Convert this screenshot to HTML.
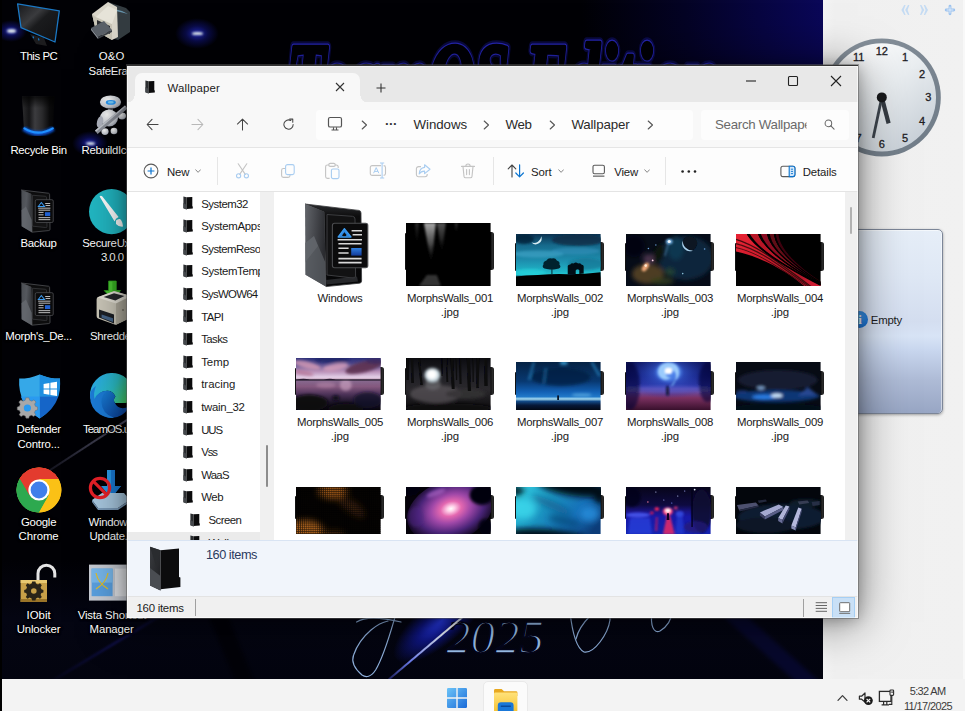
<!DOCTYPE html>
<html><head><meta charset="utf-8"><title>Desktop</title>
<style>
*{box-sizing:border-box;margin:0;padding:0}
html,body{width:965px;height:711px;overflow:hidden;background:#000;font-family:"Liberation Sans",sans-serif}
.abs{position:absolute}
.layer{position:absolute;left:0;top:0;width:965px;height:711px}
.tx{position:absolute;white-space:nowrap}
#wall{position:absolute;left:0;top:0;width:823px;height:679px;background:#010105;overflow:hidden}
#side{position:absolute;left:823px;top:0;width:142px;height:679px;background:#f1f1f1;overflow:hidden}
#task{position:absolute;left:0;top:679px;width:965px;height:32px;background:#f3f3f3;overflow:hidden}
#winframe{position:absolute;left:127px;top:65px;width:731px;height:553px;background:#fff;box-shadow:0 0 0 1px rgba(90,90,90,.5),0 4px 44px rgba(0,0,0,.5),0 1px 14px rgba(0,0,0,.28)}
#win{clip-path:polygon(127px 65px,858px 65px,858px 618px,127px 618px)}
.dl{position:absolute;width:90px;text-align:center;color:#fff;font-size:12px;line-height:14.6px;text-shadow:0 1px 1px rgba(0,0,0,.9),0 0 3px #000,0 0 2px #000;white-space:nowrap}
</style></head><body>
<div id="wall"><div class="abs" style="left:0;top:0;width:823px;height:679px;background:radial-gradient(ellipse 320px 300px at 900px -10px,#0d0970 0,#0a0758 25%,#070540 45%,#040324 68%,rgba(2,2,10,0) 100%)"></div><div class="abs" style="left:0;top:560px;width:823px;height:119px;background:linear-gradient(180deg,rgba(4,5,18,0) 0,#040512 50%,#03040f 100%)"></div><div class="abs" style="left:225px;top:600px;width:18px;height:110px;background:#020208;transform:rotate(-22deg);filter:blur(2px)"></div><div class="abs" style="left:770px;top:590px;width:16px;height:130px;background:#07082c;transform:rotate(-48deg);filter:blur(2px)"></div><div class="abs" style="left:-40px;top:443.4px;width:260px;height:1.7px;background:linear-gradient(90deg,rgba(90,90,120,0) 12%,rgba(80,80,110,.3) 35%,rgba(120,120,150,.62) 62%,rgba(110,110,140,.5) 100%);transform:rotate(-33.1deg);filter:blur(.5px)"></div><div class="abs" style="left:30px;top:642px;width:170px;height:1.6px;background:linear-gradient(90deg,rgba(20,20,110,0),rgba(22,22,110,.7) 50%,rgba(20,20,110,0));transform:rotate(-31deg);filter:blur(.8px)"></div><div class="abs" style="left:-5px;top:19.8px;width:32px;height:22.4px;background:radial-gradient(ellipse at center,rgba(40,50,230,.75) 0,rgba(20,24,150,.45) 35%,rgba(8,8,60,0) 70%)"></div><div class="abs" style="left:6.5px;top:29.3px;width:9px;height:3.4px;border-radius:50%;background:#dfe8e8;filter:blur(1px)"></div><div class="abs" style="left:175px;top:18.1px;width:44px;height:30.799999999999997px;background:radial-gradient(ellipse at center,rgba(40,50,230,.75) 0,rgba(20,24,150,.45) 35%,rgba(8,8,60,0) 70%)"></div><div class="abs" style="left:191.5px;top:31.7px;width:11px;height:3.6px;border-radius:50%;background:#dfe8e8;filter:blur(1px)"></div><div class="abs" style="left:94px;top:6.600000000000001px;width:24px;height:16.799999999999997px;background:radial-gradient(ellipse at center,rgba(40,50,230,.75) 0,rgba(20,24,150,.45) 35%,rgba(8,8,60,0) 70%)"></div><div class="abs" style="left:103.5px;top:14.0px;width:5px;height:2px;border-radius:50%;background:#dfe8e8;filter:blur(1px)"></div><div class="abs" style="left:72px;top:130.9px;width:36px;height:25.2px;background:radial-gradient(ellipse at center,rgba(40,50,230,.75) 0,rgba(20,24,150,.45) 35%,rgba(8,8,60,0) 70%)"></div><div class="abs" style="left:85.5px;top:142.0px;width:9px;height:3px;border-radius:50%;background:#dfe8e8;filter:blur(1px)"></div><div class="abs" style="left:385px;top:606px;width:96px;height:44px;background:radial-gradient(ellipse at 62% 50%,rgba(44,64,255,.95) 0,rgba(20,30,190,.65) 35%,rgba(8,10,80,0) 72%);transform:rotate(-40deg)"></div><svg class="abs" style="left:0;top:0" width="823" height="679" viewBox="0 0 823 679">
<g transform="translate(287,113.6) scale(1,1.63)" stroke-linejoin="round"><text x="0" y="0" font-family="'Liberation Serif','DejaVu Serif',serif" font-weight="bold" font-style="italic" font-size="62" textLength="432" lengthAdjust="spacingAndGlyphs" fill="none" stroke="#14147a" stroke-width="7" opacity=".5">TeamOS Edition</text><text x="0" y="0" font-family="'Liberation Serif','DejaVu Serif',serif" font-weight="bold" font-style="italic" font-size="62" textLength="432" lengthAdjust="spacingAndGlyphs" fill="none" stroke="#2626b4" stroke-width="4.4">TeamOS Edition</text><text x="0" y="0" font-family="'Liberation Serif','DejaVu Serif',serif" font-weight="bold" font-style="italic" font-size="62" textLength="432" lengthAdjust="spacingAndGlyphs" fill="#010106" stroke="#010106" stroke-width="2.8">TeamOS Edition</text></g>
<text x="446" y="653" font-family="'Liberation Serif',serif" font-style="italic" font-size="47" textLength="98" lengthAdjust="spacingAndGlyphs" fill="#9cc2ee" stroke="#04051a" stroke-width="1.7">2025</text>
<g fill="none" stroke="#8fb0dc" stroke-width="1.2" stroke-linecap="round">
<path d="M356.6 622C364 617 380 617 401 622"/><path d="M395 617C390 634 384 656 375.6 670C371 677 366 678 362 675C355 669 351 662 353.6 655C357 645 364 636 371 630C377 625 383 622 388 621"/>
<path d="M570 612C572 630 576 648 584 652C594 654 608 634 610 620C611 612 604 610 596 616"/>
<path d="M591 615C585 621 578 630 576 639"/>
<path d="M652 612C650 626 654 634 660 631C667 627 672 619 672 612"/>
</g></svg><div class="abs" style="left:374px;top:647px;width:104px;height:2.2px;background:linear-gradient(90deg,rgba(60,60,200,.3),#6a7ae8 30%,#e8f0ff 70%,#fff 82%,#cfe0ff 100%);transform:rotate(-40.2deg);filter:blur(.7px)"></div></div>
<div id="side"><div class="abs" style="left:0;top:0;width:142px;height:679px;background:linear-gradient(90deg,#f4f4f4 0,#f0f0f0 12px,#f1f1f1 100%)"></div><div class="abs" style="left:140px;top:0;width:2px;height:679px;background:#f8f8f8"></div><svg class="abs" style="left:76px;top:3px" width="60" height="14" viewBox="0 0 60 14"><g fill="#c4dbf3"><path d="M5.2 2L2.4 7L5.2 12L6.6 12L4.8 7L6.6 2ZM9 2L6.2 7L9 12L10.4 12L8.6 7L10.4 2Z"/><path d="M21 2L22.8 7L21 12L22.4 12L25.2 7L22.4 2ZM24.8 2L26.6 7L24.8 12L26.2 12L29 7L26.2 2Z"/></g><path d="M51 3.2V10.8M47.2 7H54.8" stroke="#9cc2ee" stroke-width="2.8" stroke-linecap="round"/><path d="M51 4V10M48 7H54" stroke="#e4f0fc" stroke-width=".9" stroke-linecap="round"/></svg><svg class="abs" style="left:0;top:30px" width="142" height="135" viewBox="0 30 142 135"><defs><linearGradient id="ck1" x1="0.15" y1="0.1" x2="0.85" y2="0.95"><stop offset="0" stop-color="#ffffff"/><stop offset="0.45" stop-color="#e9edf0"/><stop offset="1" stop-color="#c6ced6"/></linearGradient><linearGradient id="ck2" x1="0" y1="0" x2="1" y2="1"><stop offset="0" stop-color="#8a949e"/><stop offset="1" stop-color="#6e7a86"/></linearGradient><filter id="ckb"><feGaussianBlur stdDeviation=".5"/></filter></defs>
<circle cx="58.799999999999955" cy="97.4" r="59" fill="url(#ck2)"/><circle cx="58.799999999999955" cy="97.4" r="54.2" fill="url(#ck1)"/>
<text x="82.0" y="61.1" text-anchor="middle" font-family="'Liberation Sans',sans-serif" font-size="11" fill="#1e2024" stroke="#1e2024" stroke-width=".3">1</text><text x="99.0" y="78.1" text-anchor="middle" font-family="'Liberation Sans',sans-serif" font-size="11" fill="#1e2024" stroke="#1e2024" stroke-width=".3">2</text><text x="105.2" y="101.3" text-anchor="middle" font-family="'Liberation Sans',sans-serif" font-size="11" fill="#1e2024" stroke="#1e2024" stroke-width=".3">3</text><text x="99.0" y="124.5" text-anchor="middle" font-family="'Liberation Sans',sans-serif" font-size="11" fill="#1e2024" stroke="#1e2024" stroke-width=".3">4</text><text x="82.0" y="141.5" text-anchor="middle" font-family="'Liberation Sans',sans-serif" font-size="11" fill="#1e2024" stroke="#1e2024" stroke-width=".3">5</text><text x="58.8" y="147.7" text-anchor="middle" font-family="'Liberation Sans',sans-serif" font-size="11" fill="#1e2024" stroke="#1e2024" stroke-width=".3">6</text><text x="35.6" y="141.5" text-anchor="middle" font-family="'Liberation Sans',sans-serif" font-size="11" fill="#1e2024" stroke="#1e2024" stroke-width=".3">7</text><text x="18.6" y="124.5" text-anchor="middle" font-family="'Liberation Sans',sans-serif" font-size="11" fill="#1e2024" stroke="#1e2024" stroke-width=".3">8</text><text x="12.4" y="101.3" text-anchor="middle" font-family="'Liberation Sans',sans-serif" font-size="11" fill="#1e2024" stroke="#1e2024" stroke-width=".3">9</text><text x="18.6" y="78.1" text-anchor="middle" font-family="'Liberation Sans',sans-serif" font-size="11" fill="#1e2024" stroke="#1e2024" stroke-width=".3">10</text><text x="35.6" y="61.1" text-anchor="middle" font-family="'Liberation Sans',sans-serif" font-size="11" fill="#1e2024" stroke="#1e2024" stroke-width=".3">11</text><text x="58.8" y="54.9" text-anchor="middle" font-family="'Liberation Sans',sans-serif" font-size="11" fill="#1e2024" stroke="#1e2024" stroke-width=".3">12</text>
<g filter="url(#ckb)"><path d="M58.799999999999955 97.4L65.60000000000002 123.4" stroke="#343a42" stroke-width="4.2" stroke-linecap="butt"/><path d="M58.799999999999955 97.4L50.200000000000045 138" stroke="#3e454e" stroke-width="2.8"/></g>
<circle cx="58.799999999999955" cy="97.4" r="5" fill="#18191b"/></svg><div class="abs" style="left:-40px;top:228.6px;width:160px;height:185px;border-radius:5px;border:1.2px solid #7c8698;background:linear-gradient(180deg,#e6eef8 0,#dfe8f5 25%,#d4def0 50%,#d8e4f6 58%,#c8d6ee 66%,#aebbd6 82%,#98a6c4 100%);box-shadow:inset 0 1px 0 #f4f8fc, inset -1px 0 0 rgba(255,255,255,.5),0 1px 3px rgba(0,0,0,.35)"></div><div class="abs" style="left:28px;top:311px;width:17px;height:17px;border-radius:50%;background:radial-gradient(circle at 40% 30%,#4aa8f8,#0a64d0)"></div><span class="tx" style="left:35.2px;top:311.6px;font-size:13px;line-height:16px;color:#fff;font-weight:bold;font-family:'Liberation Serif',serif;">i</span><span class="tx" style="left:47.8px;top:312.2px;font-size:11.4px;line-height:16px;color:#1c1c1c;letter-spacing:-0.22px;">Empty</span></div>
<div class="layer" id="icons"><svg class="abs" style="left:0px;top:0px" width="76" height="50" viewBox="0 0 76 50"><defs><linearGradient id="pc1" x1="0" y1="0" x2="1" y2="1"><stop offset="0" stop-color="#16171a"/><stop offset="0.35" stop-color="#3a3b3e"/><stop offset="0.5" stop-color="#1a1b1d"/><stop offset="1" stop-color="#101012"/></linearGradient></defs>
<path d="M30 34L36 44L47 46L44 38Z" fill="#1c1c1e"/><path d="M33 36.4L33.6 38.2M38.4 38.4L39 40.4" stroke="#1a7ac8" stroke-width="1.2"/>
<path d="M17.6 3.9L59.3 10.9L55 42L21 27.6Z" fill="url(#pc1)" stroke="#1b78c4" stroke-width="1.3" stroke-linejoin="round"/></svg><span class="tx" style="left:19.9px;top:48.4px;font-size:11.4px;line-height:16px;color:#fff;letter-spacing:-0.43px;text-shadow:0 1px 1.5px #000,1px 1px 2px #000,0 0 3px #000;">This PC</span><svg class="abs" style="left:88px;top:0px" width="44" height="44" viewBox="0 0 44 44"><path d="M20 2L38 8L42 12V32L30 40L24 38Z" fill="#3a4248" opacity=".9"/><path d="M22 8L34 11L40 14L28 11Z" fill="#7ab8d8" opacity=".7"/>
<path d="M4 14L20 2L29 7L30 37L24 40L8 31Z" fill="#d9d5c9"/><path d="M4 14L8 17L24 24L24 40L8 31Z" fill="#c8c4b6"/><path d="M8 17L20 6L29 10L24 24Z" fill="#e6e3d8"/>
<path d="M9 20L22 26V34L9 28Z" fill="#2a2c30"/><path d="M3 28L16 21L24 30L10 37Z" fill="#5a6068"/><path d="M3 28L10 37V39L3 30Z" fill="#8a9098"/><path d="M10 37L24 30V32L10 39Z" fill="#3a3e44"/></svg><span class="tx" style="left:98.7px;top:48.4px;font-size:11.4px;line-height:16px;color:#fff;letter-spacing:0.15px;text-shadow:0 1px 1.5px #000,1px 1px 2px #000,0 0 3px #000;">O&amp;O</span><span class="tx" style="left:88.6px;top:63.0px;font-size:11.4px;line-height:16px;color:#fff;letter-spacing:-0.31px;text-shadow:0 1px 1.5px #000,1px 1px 2px #000,0 0 3px #000;">SafeErase</span><svg class="abs" style="left:14px;top:92px" width="50" height="50" viewBox="0 0 50 50"><defs><linearGradient id="rb1" x1="0" y1="0" x2="1" y2="0"><stop offset="0" stop-color="#2c2c2e"/><stop offset="0.22" stop-color="#141416"/><stop offset="0.4" stop-color="#3c3c3f"/><stop offset="0.62" stop-color="#2a2a2c"/><stop offset="0.85" stop-color="#0a0a0b"/><stop offset="1" stop-color="#050506"/></linearGradient><linearGradient id="rb2" x1="0" y1="0" x2="0" y2="1"><stop offset="0" stop-color="#000" stop-opacity=".75"/><stop offset="0.3" stop-color="#000" stop-opacity="0"/></linearGradient><filter id="rbb" x="-20%" y="-50%" width="140%" height="200%"><feGaussianBlur stdDeviation="1.1"/></filter></defs>
<path d="M8 4.6H40.4L39 38Q24 47 10 38Z" fill="url(#rb1)"/><path d="M8 4.6H40.4L39 38Q24 47 10 38Z" fill="url(#rb2)"/>
<path d="M9.6 36.5Q24 46.5 39.4 36.5" fill="none" stroke="#0a50c8" stroke-width="5" filter="url(#rbb)"/><path d="M10.4 36.4Q24 45 38.8 36.4" fill="none" stroke="#1e90ff" stroke-width="2.2" stroke-linecap="round"/></svg><span class="tx" style="left:10.4px;top:142.4px;font-size:11.4px;line-height:16px;color:#fff;letter-spacing:-0.34px;text-shadow:0 1px 1.5px #000,1px 1px 2px #000,0 0 3px #000;">Recycle Bin</span><svg class="abs" style="left:92px;top:92px" width="36" height="48" viewBox="0 0 36 48"><defs><radialGradient id="ro1" cx=".4" cy=".3" r=".8"><stop offset="0" stop-color="#fff"/><stop offset=".7" stop-color="#c8ccd4"/><stop offset="1" stop-color="#8a90a0"/></radialGradient></defs>
<ellipse cx="18.5" cy="10" rx="10.6" ry="6.6" fill="url(#ro1)"/><ellipse cx="18.8" cy="10.4" rx="5" ry="2.4" fill="#2a9af8"/><ellipse cx="18.8" cy="10.2" rx="3" ry="1.2" fill="#7ad0ff"/>
<rect x="16" y="16" width="5" height="3" fill="#50545c"/><ellipse cx="17" cy="26" rx="9" ry="8.6" fill="url(#ro1)"/><ellipse cx="8" cy="30" rx="3" ry="6" fill="#b0b4c0" transform="rotate(14 8 30)"/><ellipse cx="30" cy="24" rx="4" ry="3.4" fill="url(#ro1)"/>
<ellipse cx="13" cy="39.6" rx="3.6" ry="3.4" fill="url(#ro1)"/><ellipse cx="22" cy="39" rx="3.4" ry="3.2" fill="url(#ro1)"/>
<path d="M3 38.6L33 13.6L35.6 16.6L5.6 42Z" fill="#8e929c"/><path d="M3 38.6L33 13.6L33.8 14.6L4 39.8Z" fill="#c4c8d0"/></svg><span class="tx" style="left:81.5px;top:142.4px;font-size:11.4px;line-height:16px;color:#fff;letter-spacing:-0.31px;text-shadow:0 1px 1.5px #000,1px 1px 2px #000,0 0 3px #000;">RebuildIconCache</span><svg class="abs" style="left:20.4px;top:189px" width="35" height="44.4" viewBox="0 0 34 44"><defs><linearGradient id="df1a" x1="0" y1="0" x2="1" y2="0.3"><stop offset="0" stop-color="#4a4d52"/><stop offset="0.5" stop-color="#55585e"/><stop offset="1" stop-color="#34363a"/></linearGradient></defs>
<path d="M1 1L28 4.2Q29 4.4 29 5.6L29.4 40Q29.4 41 28.2 41.2L11.6 42.8L10.4 5Z" fill="#0d0d0e" stroke="#4e4f53" stroke-width=".8"/>
<path d="M12 6.2L24.8 7.2Q26 7.4 26 8.6L26.4 37.2Q26.4 38.4 25 38.2L12 36.8Z" fill="#131314" stroke="#3c3d40" stroke-width=".7"/>
<path d="M1 1L10.8 5L11.6 43L1.3 37Z" fill="url(#df1a)"/>
<path d="M1.1 21L5.6 17.4L11.2 30.6L11.6 43L1.3 37Z" fill="#666a70" opacity=".8"/>
<rect x="14.8" y="10.6" width="17.8" height="22.6" rx="1.4" fill="#0b0b0c" stroke="#4c4d50" stroke-width=".8"/>
<path d="M17.8 17.4L20.8 13.4L24 17.4Z" fill="none" stroke="#3b9bf0" stroke-width="1"/>
<g stroke="#d0d0d0" stroke-width=".9"><path d="M24.6 14.4H29.6M25 16.4H29.6M17.6 19H29.8M18 21H29.6M18 23.2H23M18 25.6H23M18 28.4H29.6M18 30.4H29.6"/></g>
<rect x="24.4" y="23" width="5.2" height="3.8" fill="#1f5fd0"/></svg><span class="tx" style="left:20.6px;top:235.4px;font-size:11.4px;line-height:16px;color:#fff;letter-spacing:-0.34px;text-shadow:0 1px 1.5px #000,1px 1px 2px #000,0 0 3px #000;">Backup</span><svg class="abs" style="left:88px;top:188px" width="48" height="48" viewBox="0 0 48 48"><circle cx="23.6" cy="23.6" r="22.6" fill="#22b8c4"/><path d="M11.6 8.4Q13 7 14.4 8.6L30.6 29Q27.4 30.4 26.6 33.4Z" fill="#fff"/><path d="M28 32.6Q29.6 30.6 32 31Q34.6 33 35 38.6Q30.6 39 28 36Z" fill="#fff"/></svg><span class="tx" style="left:82.3px;top:235.4px;font-size:11.4px;line-height:16px;color:#fff;letter-spacing:-0.29px;text-shadow:0 1px 1.5px #000,1px 1px 2px #000,0 0 3px #000;">SecureUxT...</span><span class="tx" style="left:100.9px;top:249.4px;font-size:11.4px;line-height:16px;color:#fff;letter-spacing:-0.53px;text-shadow:0 1px 1.5px #000,1px 1px 2px #000,0 0 3px #000;">3.0.0</span><svg class="abs" style="left:20.4px;top:282px" width="35" height="44.4" viewBox="0 0 34 44"><defs><linearGradient id="df1b" x1="0" y1="0" x2="1" y2="0.3"><stop offset="0" stop-color="#4a4d52"/><stop offset="0.5" stop-color="#55585e"/><stop offset="1" stop-color="#34363a"/></linearGradient></defs>
<path d="M1 1L28 4.2Q29 4.4 29 5.6L29.4 40Q29.4 41 28.2 41.2L11.6 42.8L10.4 5Z" fill="#0d0d0e" stroke="#4e4f53" stroke-width=".8"/>
<path d="M12 6.2L24.8 7.2Q26 7.4 26 8.6L26.4 37.2Q26.4 38.4 25 38.2L12 36.8Z" fill="#131314" stroke="#3c3d40" stroke-width=".7"/>
<path d="M1 1L10.8 5L11.6 43L1.3 37Z" fill="url(#df1b)"/>
<path d="M1.1 21L5.6 17.4L11.2 30.6L11.6 43L1.3 37Z" fill="#666a70" opacity=".8"/>
<rect x="14.8" y="10.6" width="17.8" height="22.6" rx="1.4" fill="#0b0b0c" stroke="#4c4d50" stroke-width=".8"/>
<path d="M17.8 17.4L20.8 13.4L24 17.4Z" fill="none" stroke="#3b9bf0" stroke-width="1"/>
<g stroke="#d0d0d0" stroke-width=".9"><path d="M24.6 14.4H29.6M25 16.4H29.6M17.6 19H29.8M18 21H29.6M18 23.2H23M18 25.6H23M18 28.4H29.6M18 30.4H29.6"/></g>
<rect x="24.4" y="23" width="5.2" height="3.8" fill="#1f5fd0"/></svg><span class="tx" style="left:5.3px;top:328.2px;font-size:11.4px;line-height:16px;color:#fff;letter-spacing:-0.31px;text-shadow:0 1px 1.5px #000,1px 1px 2px #000,0 0 3px #000;">Morph's_De...</span><svg class="abs" style="left:94px;top:280px" width="38" height="46" viewBox="0 0 38 46"><path d="M14.6 1H22.2V10.6H26.6L18.4 19.4L10.2 10.6H14.6Z" fill="#4cc834" stroke="#2c9a1c" stroke-width=".8"/><path d="M18.4 1H22.2V10.6H26.6L18.4 19.4Z" fill="#38b024"/>
<path d="M2.6 19.6Q2.4 17.6 4.6 16.8L19 11.4Q20.6 11 22 11.6L35.6 15.6Q37 16.2 37 18V37.6L22.6 44.6Q21.6 45 20.6 44.6L4 38.4Q2.6 37.8 2.6 36Z" fill="#cdc9bb"/>
<path d="M3.4 17.4L20 11.2L36.6 16L22 23.4Z" fill="#e6e3d8"/><path d="M9.6 17L20 13.2L30.4 16L21.4 20.4Z" fill="#26282c"/>
<path d="M22 23.4L37 16.4V37.6L22 44.8Z" fill="#b2ae9f"/>
<path d="M5 29.6L20 34.6V43.4L5 37.6Z" fill="#1c2026"/><path d="M7.6 34.4L19 38.2V42L7.6 37.8Z" fill="#4a6c94" opacity=".9"/><circle cx="29" cy="30" r="1" fill="#7a766a"/></svg><span class="tx" style="left:89.9px;top:328.2px;font-size:11.4px;line-height:16px;color:#fff;letter-spacing:-0.31px;text-shadow:0 1px 1.5px #000,1px 1px 2px #000,0 0 3px #000;">Shredder</span><svg class="abs" style="left:16px;top:372px" width="46" height="48" viewBox="0 0 46 48"><path d="M23.6 2.4Q33 6.6 44 6.6Q45.6 32 23.6 46.6Q1.6 32 3.2 6.6Q14 6.6 23.6 2.4Z" fill="#35a8e8"/><path d="M23.6 2.4Q33 6.6 44 6.6Q44.6 17 42.4 24.6H23.6Z" fill="#1e8ee0"/><path d="M23.6 24.6H42.4Q38 38 23.6 46.6Z" fill="#1565c8"/><path d="M23.6 24.6V46.6Q9.4 38 4.8 24.6Z" fill="#2a9af0"/>
<path d="M27.6 12L33.4 11V16.4H27.6ZM34.4 10.8L41 9.8V16.4H34.4ZM27.6 17.4H33.4V22.8L27.6 21.8ZM34.4 17.4H41V24L34.4 23Z" fill="#fff"/>
<g transform="translate(11.4,36)"><path d="M-2 -11H2L2.8 -8L5.6 -6.8L8.4 -8.4L11 -5.6L9.2 -3L10.2 -0.2L13 .8V4.4L10.2 5.2L9 8L10.6 10.6L8 13L5.4 11.4L2.6 12.4L1.8 15H-1.8L-2.6 12.4L-5.4 11.4L-8 13L-10.6 10.6L-9 8L-10.2 5.2L-13 4.4V.8L-10.2 -.2L-9.2 -3L-11 -5.6L-8.4 -8.4L-5.6 -6.8L-2.8 -8Z" fill="#a8a8a8" stroke="#6a6a6a" stroke-width=".6" transform="scale(.78) translate(0,-2)"/><circle cx="0" cy="0" r="3.6" fill="#2a9af0"/></g></svg><span class="tx" style="left:16.5px;top:421.4px;font-size:11.4px;line-height:16px;color:#fff;letter-spacing:-0.32px;text-shadow:0 1px 1.5px #000,1px 1px 2px #000,0 0 3px #000;">Defender</span><span class="tx" style="left:17.4px;top:435.8px;font-size:11.4px;line-height:16px;color:#fff;letter-spacing:-0.14px;text-shadow:0 1px 1.5px #000,1px 1px 2px #000,0 0 3px #000;">Contro...</span><svg class="abs" style="left:88px;top:372px" width="48" height="48" viewBox="0 0 48 48"><defs><linearGradient id="ed1" x1="0" y1="0.2" x2="1" y2="0.6"><stop offset="0" stop-color="#2aa8ec"/><stop offset="0.55" stop-color="#2cc0c8"/><stop offset="1" stop-color="#4cd860"/></linearGradient><linearGradient id="ed3" x1="0" y1="0" x2="1" y2="1"><stop offset="0" stop-color="#1a88e0"/><stop offset="1" stop-color="#0a3c98"/></linearGradient></defs>
<path d="M2 24A22 22 0 0 1 46 22Q46 31 37 31H27Q24.6 28 27.4 24.6Q24 16.6 15 19.4Q6.4 22.6 6.6 32Q2 28 2 24Z" fill="url(#ed1)"/>
<path d="M6.6 32Q6.4 22.6 15 19.4Q24 16.6 27.4 24.6Q24.6 28 27 31Q30 38.6 41 35Q35 46 23 46Q10.6 45 6.6 32Z" fill="url(#ed3)"/>
<path d="M2 24Q2 36 12 42.6Q20 47 26 45.8Q14 42 13.4 30Q13.6 23 19 19Q10 19 6.6 27Q5 21 8 14Q2 18 2 24Z" fill="#1c7cd8"/></svg><span class="tx" style="left:83.0px;top:421.4px;font-size:11.4px;line-height:16px;color:#fff;letter-spacing:-0.97px;text-shadow:0 1px 1.5px #000,1px 1px 2px #000,0 0 3px #000;">TeamOS.url</span><svg class="abs" style="left:15px;top:466px" width="48" height="48" viewBox="0 0 48 48"><circle cx="24" cy="24" r="22.4" fill="#fbc116"/><path d="M24 24L4.6 12.8A22.4 22.4 0 0 1 43.4 12.8Z" fill="#e33b2e"/><path d="M24 24L4.6 12.8A22.4 22.4 0 0 0 24 46.4L33.6 29.6Z" fill="#2da94f"/><path d="M24 13H43.6A22.4 22.4 0 0 0 4.6 12.8L14.4 29.6Z" fill="#e33b2e"/><path d="M14.4 29.6L4.6 12.8A22.4 22.4 0 0 0 24 46.4L33.6 29.6Z" fill="#2da94f"/><path d="M33.6 29.6L24 46.4A22.4 22.4 0 0 0 43.5 13H24Z" fill="#fbc116"/><circle cx="24" cy="24" r="10.6" fill="#fff"/><circle cx="24" cy="24" r="8.4" fill="#3f7fea"/></svg><span class="tx" style="left:20.9px;top:514.0px;font-size:11.4px;line-height:16px;color:#fff;letter-spacing:-0.23px;text-shadow:0 1px 1.5px #000,1px 1px 2px #000,0 0 3px #000;">Google</span><span class="tx" style="left:18.6px;top:528.4px;font-size:11.4px;line-height:16px;color:#fff;letter-spacing:-0.09px;text-shadow:0 1px 1.5px #000,1px 1px 2px #000,0 0 3px #000;">Chrome</span><svg class="abs" style="left:88px;top:466px" width="44" height="48" viewBox="0 0 44 48"><path d="M19 4H27V20H33L23 32L13 20H19Z" fill="#2a9ae8"/><path d="M23 4H27V20H33L23 32Z" fill="#1a78d0"/><path d="M4 34L14 27H36L42 34L30 42H10Z" fill="#a8c8e0"/><path d="M10 42H30L42 34V36L30 44H10L4 36V34Z" fill="#7a9ab8"/><circle cx="12" cy="22" r="9.6" fill="none" stroke="#e82028" stroke-width="3.2"/><path d="M5.4 15.4L18.6 28.6" stroke="#e82028" stroke-width="3.2"/></svg><span class="tx" style="left:88.6px;top:514.0px;font-size:11.4px;line-height:16px;color:#fff;letter-spacing:-0.35px;text-shadow:0 1px 1.5px #000,1px 1px 2px #000,0 0 3px #000;">Windows</span><span class="tx" style="left:89.6px;top:528.4px;font-size:11.4px;line-height:16px;color:#fff;letter-spacing:-0.27px;text-shadow:0 1px 1.5px #000,1px 1px 2px #000,0 0 3px #000;">Update...</span><svg class="abs" style="left:18px;top:560px" width="42" height="46" viewBox="0 0 42 46"><path d="M20 20V13.6A8.4 8.4 0 0 1 36.8 13.6V17.6" fill="none" stroke="#e4e4e4" stroke-width="3"/><rect x="2.6" y="20" width="26.4" height="22" fill="#c8a048"/><rect x="2.6" y="20" width="26.4" height="3" fill="#e8c870"/><rect x="2.6" y="39" width="26.4" height="3" fill="#9a7428"/>
<g transform="translate(15.8,31)"><path d="M-1.6 -8H1.6L2.2 -5.8L4.2 -5L6.2 -6.2L8 -4.2L6.8 -2.2L7.6 -.2L9.6 .6V3L7.6 3.6L6.8 5.6L8 7.6L6.2 9.4L4.2 8.2L2.2 9L1.6 11H-1.6L-2.2 9L-4.2 8.2L-6.2 9.4L-8 7.6L-6.8 5.6L-7.6 3.6L-9.6 3V.6L-7.6 -.2L-6.8 -2.2L-8 -4.2L-6.2 -6.2L-4.2 -5L-2.2 -5.8Z" fill="#2a2418" transform="translate(0,-1.6)"/><circle cx="0" cy="0" r="2.8" fill="#c8a048"/></g></svg><span class="tx" style="left:26.5px;top:607.2px;font-size:11.4px;line-height:16px;color:#fff;letter-spacing:0.03px;text-shadow:0 1px 1.5px #000,1px 1px 2px #000,0 0 3px #000;">IObit</span><span class="tx" style="left:16.7px;top:621.4px;font-size:11.4px;line-height:16px;color:#fff;letter-spacing:-0.15px;text-shadow:0 1px 1.5px #000,1px 1px 2px #000,0 0 3px #000;">Unlocker</span><svg class="abs" style="left:88px;top:563px" width="44" height="40" viewBox="0 0 44 40"><rect x="1" y="1.6" width="50" height="36" fill="#c8ccd4"/><rect x="3.6" y="5.6" width="21" height="27.6" fill="#5aa0e0"/><rect x="3.6" y="5.6" width="21" height="14" fill="#78b8ec"/><path d="M8 26Q18 20 20 10M20 26Q10 20 8 10" stroke="#e8c020" stroke-width="1.2" fill="none"/><rect x="27" y="5.6" width="12" height="27.6" fill="#e4e6ea"/><rect x="40" y="10" width="8" height="8" fill="#3a70d0"/></svg><span class="tx" style="left:77.7px;top:607.2px;font-size:11.4px;line-height:16px;color:#fff;letter-spacing:-0.15px;text-shadow:0 1px 1.5px #000,1px 1px 2px #000,0 0 3px #000;">Vista Shortcut</span><span class="tx" style="left:89.6px;top:621.4px;font-size:11.4px;line-height:16px;color:#fff;letter-spacing:-0.14px;text-shadow:0 1px 1.5px #000,1px 1px 2px #000,0 0 3px #000;">Manager</span></div>
<div id="winframe"></div>
<div class="layer" id="win">
<div class="abs" style="left:127px;top:65px;width:731px;height:37px;background:#e8e8e8"></div><div class="abs" style="left:135px;top:73px;width:225px;height:30px;background:#f8f8f8;border-radius:7px 7px 0 0"></div><div class="abs" style="left:128px;top:96px;width:7px;height:6px;background:radial-gradient(circle at 0 0,#e8e8e8 6px,#f8f8f8 6.5px)"></div><div class="abs" style="left:360px;top:96px;width:7px;height:6px;background:radial-gradient(circle at 100% 0,#e8e8e8 6px,#f8f8f8 6.5px)"></div><svg class="abs" style="left:145px;top:80px" width="10" height="14" viewBox="0 0 10 14"><path d="M0.4 0.6 L3.6 1.3 L3.6 13.6 L0.4 12.3 Z" fill="#2b2d30"/><path d="M3.6 1.3 L9.3 0.9 L9.3 10.2 L9.8 10.4 L9.8 12.6 L3.6 13.0 Z" fill="#0b0b0c"/><path d="M0.4 7 L3.6 9 L3.6 13.6 L0.4 12.3Z" fill="#45484c"/></svg><span class="tx" style="left:167.6px;top:80.3px;font-size:11.4px;line-height:16px;color:#1a1a1a;letter-spacing:0.17px;">Wallpaper</span><svg class="abs" style="left:335px;top:82px" width="10" height="10" viewBox="0 0 10 10"><path d="M1 1L9 9M9 1L1 9" stroke="#333" stroke-width="1.1" fill="none"/></svg><svg class="abs" style="left:376px;top:83px" width="10" height="10" viewBox="0 0 10 10"><path d="M5 0.5V9.5M0.5 5H9.5" stroke="#333" stroke-width="1.1" fill="none"/></svg><svg class="abs" style="left:745px;top:75px" width="12" height="12" viewBox="0 0 12 12"><path d="M1 6H11" stroke="#222" stroke-width="1.1"/></svg><svg class="abs" style="left:787px;top:75px" width="12" height="12" viewBox="0 0 12 12"><rect x="1.5" y="1.5" width="9" height="9" rx="1" fill="none" stroke="#222" stroke-width="1.1"/></svg><svg class="abs" style="left:830px;top:75px" width="12" height="12" viewBox="0 0 12 12"><path d="M1 1L11 11M11 1L1 11" stroke="#222" stroke-width="1.1" fill="none"/></svg><div class="abs" style="left:127px;top:102px;width:731px;height:46px;background:#f8f8f8"></div><div class="abs" style="left:127px;top:147px;width:731px;height:1px;background:#e5e5e5"></div><svg class="abs" style="left:145.5px;top:118.2px" width="13" height="13" viewBox="0 0 14 14"><path d="M13 7H1.5M6.5 1.5L1.2 7L6.5 12.5" stroke="#444" stroke-width="1.1" fill="none" stroke-linecap="round" stroke-linejoin="round"/></svg><svg class="abs" style="left:190.5px;top:118.2px" width="13" height="13" viewBox="0 0 14 14"><path d="M1 7H12.5M7.5 1.5L12.8 7L7.5 12.5" stroke="#b8b8b8" stroke-width="1.1" fill="none" stroke-linecap="round" stroke-linejoin="round"/></svg><svg class="abs" style="left:235.5px;top:118.2px" width="13" height="13" viewBox="0 0 14 14"><path d="M7 13V1.5M1.5 6.5L7 1.2L12.5 6.5" stroke="#444" stroke-width="1.1" fill="none" stroke-linecap="round" stroke-linejoin="round"/></svg><svg class="abs" style="left:281.5px;top:118.2px" width="13" height="13" viewBox="0 0 14 14"><path d="M12 7A5 5 0 1 1 9.5 2.7" stroke="#444" stroke-width="1.1" fill="none" stroke-linecap="round"/><path d="M8.2 1.2H11.6V4.6" stroke="#444" stroke-width="1.1" fill="none" stroke-linecap="round" stroke-linejoin="round"/></svg><div class="abs" style="left:316px;top:110px;width:377px;height:30px;background:#fdfdfd;border-radius:4px"></div><svg class="abs" style="left:327px;top:116px" width="16" height="16" viewBox="0 0 16 16"><rect x="1.5" y="1.5" width="13" height="9.5" rx="1.6" fill="none" stroke="#555" stroke-width="1.2"/><path d="M4.5 14H11.5M6.5 11.3V14M9.5 11.3V14" stroke="#555" stroke-width="1.1" fill="none"/></svg><svg class="abs" style="left:361px;top:119.5px" width="7" height="10" viewBox="0 0 7 10"><path d="M1.2 1L5.5 5L1.2 9" stroke="#555" stroke-width="1.1" fill="none" stroke-linecap="round" stroke-linejoin="round"/></svg><span class="tx" style="left:385.0px;top:116.0px;font-size:13.3px;line-height:16px;color:#333;letter-spacing:-0.43px;font-weight:bold;">···</span><span class="tx" style="left:413.5px;top:115.5px;font-size:13.3px;line-height:18px;color:#2a2a2a;letter-spacing:-0.06px;">Windows</span><svg class="abs" style="left:483px;top:119.5px" width="7" height="10" viewBox="0 0 7 10"><path d="M1.2 1L5.5 5L1.2 9" stroke="#555" stroke-width="1.1" fill="none" stroke-linecap="round" stroke-linejoin="round"/></svg><span class="tx" style="left:505.5px;top:115.5px;font-size:13.3px;line-height:18px;color:#2a2a2a;letter-spacing:-0.37px;">Web</span><svg class="abs" style="left:548.5px;top:119.5px" width="7" height="10" viewBox="0 0 7 10"><path d="M1.2 1L5.5 5L1.2 9" stroke="#555" stroke-width="1.1" fill="none" stroke-linecap="round" stroke-linejoin="round"/></svg><span class="tx" style="left:571.4px;top:115.5px;font-size:13.3px;line-height:18px;color:#2a2a2a;letter-spacing:-0.15px;">Wallpaper</span><svg class="abs" style="left:647px;top:119.5px" width="7" height="10" viewBox="0 0 7 10"><path d="M1.2 1L5.5 5L1.2 9" stroke="#555" stroke-width="1.1" fill="none" stroke-linecap="round" stroke-linejoin="round"/></svg><div class="abs" style="left:701px;top:110px;width:148px;height:30px;background:#fdfdfd;border-radius:4px"></div><div class="layer" style="clip-path:polygon(701px 110px,806.5px 110px,806.5px 140px,701px 140px)"><span class="tx" style="left:715.0px;top:115.5px;font-size:13.3px;line-height:18px;color:#6a6a6a;letter-spacing:-0.29px;">Search Wallpaper</span></div><svg class="abs" style="left:824px;top:119px" width="11" height="11" viewBox="0 0 12 12"><circle cx="4.8" cy="4.8" r="3.6" fill="none" stroke="#666" stroke-width="1.1"/><path d="M7.5 7.5L11 11" stroke="#666" stroke-width="1.2" stroke-linecap="round"/></svg><div class="abs" style="left:127px;top:148px;width:731px;height:44px;background:#fdfdfd"></div><div class="abs" style="left:127px;top:191px;width:731px;height:1px;background:#e4e4e4"></div>
<svg class="abs" style="left:143px;top:163px" width="16" height="16" viewBox="0 0 16 16"><circle cx="8" cy="8" r="6.9" fill="none" stroke="#5a5a5a" stroke-width="1.1"/><path d="M8 4.6V11.4M4.6 8H11.4" stroke="#0a74d0" stroke-width="1.2" fill="none"/></svg><span class="tx" style="left:167.0px;top:163.5px;font-size:11.4px;line-height:16px;color:#1b1b1b;letter-spacing:-0.17px;">New</span><svg class="abs" style="left:195.3px;top:169.3px" width="6.2" height="4.4" viewBox="0 0 7 5"><path d="M0.8 0.9L3.5 3.8L6.2 0.9" stroke="#777" stroke-width="1" fill="none" stroke-linecap="round" stroke-linejoin="round"/></svg><div class="abs" style="left:217px;top:157px;width:1px;height:28px;background:#e6e6e6"></div><svg class="abs" style="left:235px;top:163px" width="15" height="16" viewBox="0 0 15 16"><path d="M3.2 0.8L10.3 11.4M11.8 0.8L4.7 11.4" stroke="#c4c4c4" stroke-width="1.1" fill="none" stroke-linecap="round"/><circle cx="3.6" cy="12.8" r="2.1" fill="none" stroke="#a9cdf1" stroke-width="1.1"/><circle cx="11.4" cy="12.8" r="2.1" fill="none" stroke="#a9cdf1" stroke-width="1.1"/></svg><svg class="abs" style="left:280px;top:163px" width="16" height="16" viewBox="0 0 16 16"><path d="M5.5 5.5H3.4A1.8 1.8 0 0 0 1.6 7.3V12.6A1.8 1.8 0 0 0 3.4 14.4H8.2A1.8 1.8 0 0 0 10 12.6V11.8" stroke="#c4c4c4" stroke-width="1.1" fill="none"/><rect x="5.6" y="1.6" width="8.6" height="10" rx="1.9" fill="none" stroke="#a9cdf1" stroke-width="1.1"/></svg><svg class="abs" style="left:324px;top:162px" width="16" height="18" viewBox="0 0 16 18"><path d="M5 3H3.4A1.8 1.8 0 0 0 1.6 4.8V14.6A1.8 1.8 0 0 0 3.4 16.4H5.6M11 3H12.4A1.8 1.8 0 0 1 14.2 4.8V6" stroke="#c4c4c4" stroke-width="1.1" fill="none"/><rect x="4.8" y="1.4" width="6.4" height="3" rx="1.3" fill="none" stroke="#c4c4c4" stroke-width="1.1"/><rect x="7.4" y="7" width="7.6" height="9.6" rx="1.6" fill="none" stroke="#a9cdf1" stroke-width="1.1"/></svg><svg class="abs" style="left:369px;top:162px" width="18" height="17" viewBox="0 0 18 17"><path d="M12 3.6H3.2A1.9 1.9 0 0 0 1.3 5.5V11.5A1.9 1.9 0 0 0 3.2 13.4H12M14.6 3.6A1.9 1.9 0 0 1 16.5 5.5V11.5A1.9 1.9 0 0 1 14.6 13.4" stroke="#c4c4c4" stroke-width="1.1" fill="none"/><path d="M11 1H15.2M13.1 1V16M11 16H15.2" stroke="#a9cdf1" stroke-width="1.1" fill="none"/><path d="M4.6 11.2L7.2 5.6L9.8 11.2M5.5 9.4H8.9" stroke="#a9cdf1" stroke-width="1" fill="none"/></svg><svg class="abs" style="left:415px;top:164px" width="16" height="14" viewBox="0 0 16 14"><path d="M6 2.6H3.6A2.2 2.2 0 0 0 1.4 4.8V10.6A2.2 2.2 0 0 0 3.6 12.8H10A2.2 2.2 0 0 0 12.2 10.6V10" stroke="#c4c4c4" stroke-width="1.1" fill="none"/><path d="M9.6 0.8L15 5.2L9.6 9.6V7.1C7 7 5.4 8 4.2 10C4.4 6.6 6 3.8 9.6 3.4Z" stroke="#a9cdf1" stroke-width="1.1" fill="none" stroke-linejoin="round"/></svg><svg class="abs" style="left:460px;top:163px" width="16" height="16" viewBox="0 0 16 16"><path d="M1.5 3.4H14.5M5.8 3.2A2.2 2.2 0 0 1 10.2 3.2M3 3.6L4 13.4A1.6 1.6 0 0 0 5.6 14.8H10.4A1.6 1.6 0 0 0 12 13.4L13 3.6M6.6 6.6V11.6M9.4 6.6V11.6" stroke="#c4c4c4" stroke-width="1.1" fill="none" stroke-linecap="round"/></svg><div class="abs" style="left:493px;top:157px;width:1px;height:28px;background:#e6e6e6"></div><svg class="abs" style="left:507px;top:164px" width="18" height="14" viewBox="0 0 18 14"><path d="M5 13V1.2M1.2 4.8L5 1L8.8 4.8" stroke="#444" stroke-width="1.1" fill="none" stroke-linecap="round" stroke-linejoin="round"/><path d="M12.6 0.8V12.6M8.8 9L12.6 12.8L16.4 9" stroke="#0a74d0" stroke-width="1.2" fill="none" stroke-linecap="round" stroke-linejoin="round"/></svg><span class="tx" style="left:531.0px;top:163.5px;font-size:11.4px;line-height:16px;color:#1b1b1b;letter-spacing:-0.10px;">Sort</span><svg class="abs" style="left:557.9px;top:169.3px" width="6.2" height="4.4" viewBox="0 0 7 5"><path d="M0.8 0.9L3.5 3.8L6.2 0.9" stroke="#777" stroke-width="1" fill="none" stroke-linecap="round" stroke-linejoin="round"/></svg><svg class="abs" style="left:592px;top:164px" width="14" height="14" viewBox="0 0 14 14"><rect x="1" y="1.2" width="11.4" height="8.6" rx="1.6" fill="none" stroke="#5a5a5a" stroke-width="1.1"/><path d="M1 12.2H12.4" stroke="#888" stroke-width="1.6"/></svg><span class="tx" style="left:614.2px;top:163.5px;font-size:11.4px;line-height:16px;color:#1b1b1b;letter-spacing:-0.18px;">View</span><svg class="abs" style="left:643.6px;top:169.3px" width="6.2" height="4.4" viewBox="0 0 7 5"><path d="M0.8 0.9L3.5 3.8L6.2 0.9" stroke="#777" stroke-width="1" fill="none" stroke-linecap="round" stroke-linejoin="round"/></svg><div class="abs" style="left:665px;top:157px;width:1px;height:28px;background:#e6e6e6"></div><svg class="abs" style="left:681px;top:169px" width="16" height="5" viewBox="0 0 16 5"><circle cx="1.6" cy="2.5" r="1.3" fill="#222"/><circle cx="7.8" cy="2.5" r="1.3" fill="#222"/><circle cx="14" cy="2.5" r="1.3" fill="#222"/></svg><svg class="abs" style="left:780px;top:165px" width="16" height="13" viewBox="0 0 16 13"><rect x="0.9" y="1.2" width="14" height="10.4" rx="2" fill="none" stroke="#5a5a5a" stroke-width="1.1"/><path d="M9.2 1.2H12.9A2 2 0 0 1 14.9 3.2V9.6A2 2 0 0 1 12.9 11.6H9.2Z" fill="#d6e9fb" stroke="#0a74d0" stroke-width="1.1"/><path d="M10.9 4.2H13M10.9 6.4H13M10.9 8.6H13" stroke="#0a74d0" stroke-width="0.9"/></svg><span class="tx" style="left:802.8px;top:163.5px;font-size:11.4px;line-height:16px;color:#1b1b1b;letter-spacing:-0.15px;">Details</span>
<div class="abs" style="left:127px;top:192px;width:133px;height:349px;background:#fff"></div><div class="abs" style="left:260px;top:192px;width:14px;height:349px;background:#f0f0f0"></div><div class="abs" style="left:274px;top:192px;width:584px;height:349px;background:#fff"></div><div class="abs" style="left:265.5px;top:445px;width:2px;height:42px;background:#8c8c8c;border-radius:1px"></div><div class="abs" style="left:845px;top:192px;width:13px;height:349px;background:#f0f0f0"></div><div class="abs" style="left:850px;top:207px;width:2px;height:27px;background:#b2b2b2;border-radius:1px"></div><div class="layer" style="clip-path:polygon(127px 192px,260px 192px,260px 541px,127px 541px)"><svg class="abs" style="left:183px;top:196.4px" width="10" height="14" viewBox="0 0 10 14"><path d="M0.4 0.6 L3.6 1.3 L3.6 13.6 L0.4 12.3 Z" fill="#2b2d30"/><path d="M3.6 1.3 L9.3 0.9 L9.3 10.2 L9.8 10.4 L9.8 12.6 L3.6 13.0 Z" fill="#0b0b0c"/><path d="M0.4 7 L3.6 9 L3.6 13.6 L0.4 12.3Z" fill="#45484c"/></svg><span class="tx" style="left:201.2px;top:195.6px;font-size:11.4px;line-height:16px;color:#1a1a1a;letter-spacing:-0.49px;">System32</span><svg class="abs" style="left:183px;top:219.0px" width="10" height="14" viewBox="0 0 10 14"><path d="M0.4 0.6 L3.6 1.3 L3.6 13.6 L0.4 12.3 Z" fill="#2b2d30"/><path d="M3.6 1.3 L9.3 0.9 L9.3 10.2 L9.8 10.4 L9.8 12.6 L3.6 13.0 Z" fill="#0b0b0c"/><path d="M0.4 7 L3.6 9 L3.6 13.6 L0.4 12.3Z" fill="#45484c"/></svg><span class="tx" style="left:201.2px;top:218.2px;font-size:11.4px;line-height:16px;color:#1a1a1a;letter-spacing:-0.28px;">SystemApps</span><svg class="abs" style="left:183px;top:241.6px" width="10" height="14" viewBox="0 0 10 14"><path d="M0.4 0.6 L3.6 1.3 L3.6 13.6 L0.4 12.3 Z" fill="#2b2d30"/><path d="M3.6 1.3 L9.3 0.9 L9.3 10.2 L9.8 10.4 L9.8 12.6 L3.6 13.0 Z" fill="#0b0b0c"/><path d="M0.4 7 L3.6 9 L3.6 13.6 L0.4 12.3Z" fill="#45484c"/></svg><span class="tx" style="left:201.2px;top:240.8px;font-size:11.4px;line-height:16px;color:#1a1a1a;letter-spacing:-0.53px;">SystemResources</span><svg class="abs" style="left:183px;top:264.2px" width="10" height="14" viewBox="0 0 10 14"><path d="M0.4 0.6 L3.6 1.3 L3.6 13.6 L0.4 12.3 Z" fill="#2b2d30"/><path d="M3.6 1.3 L9.3 0.9 L9.3 10.2 L9.8 10.4 L9.8 12.6 L3.6 13.0 Z" fill="#0b0b0c"/><path d="M0.4 7 L3.6 9 L3.6 13.6 L0.4 12.3Z" fill="#45484c"/></svg><span class="tx" style="left:201.2px;top:263.4px;font-size:11.4px;line-height:16px;color:#1a1a1a;letter-spacing:-0.35px;">SystemTemp</span><svg class="abs" style="left:183px;top:286.8px" width="10" height="14" viewBox="0 0 10 14"><path d="M0.4 0.6 L3.6 1.3 L3.6 13.6 L0.4 12.3 Z" fill="#2b2d30"/><path d="M3.6 1.3 L9.3 0.9 L9.3 10.2 L9.8 10.4 L9.8 12.6 L3.6 13.0 Z" fill="#0b0b0c"/><path d="M0.4 7 L3.6 9 L3.6 13.6 L0.4 12.3Z" fill="#45484c"/></svg><span class="tx" style="left:201.2px;top:286.0px;font-size:11.4px;line-height:16px;color:#1a1a1a;letter-spacing:-0.73px;">SysWOW64</span><svg class="abs" style="left:183px;top:309.4px" width="10" height="14" viewBox="0 0 10 14"><path d="M0.4 0.6 L3.6 1.3 L3.6 13.6 L0.4 12.3 Z" fill="#2b2d30"/><path d="M3.6 1.3 L9.3 0.9 L9.3 10.2 L9.8 10.4 L9.8 12.6 L3.6 13.0 Z" fill="#0b0b0c"/><path d="M0.4 7 L3.6 9 L3.6 13.6 L0.4 12.3Z" fill="#45484c"/></svg><span class="tx" style="left:201.2px;top:308.6px;font-size:11.4px;line-height:16px;color:#1a1a1a;letter-spacing:-0.62px;">TAPI</span><svg class="abs" style="left:183px;top:332.0px" width="10" height="14" viewBox="0 0 10 14"><path d="M0.4 0.6 L3.6 1.3 L3.6 13.6 L0.4 12.3 Z" fill="#2b2d30"/><path d="M3.6 1.3 L9.3 0.9 L9.3 10.2 L9.8 10.4 L9.8 12.6 L3.6 13.0 Z" fill="#0b0b0c"/><path d="M0.4 7 L3.6 9 L3.6 13.6 L0.4 12.3Z" fill="#45484c"/></svg><span class="tx" style="left:201.2px;top:331.2px;font-size:11.4px;line-height:16px;color:#1a1a1a;letter-spacing:-0.57px;">Tasks</span><svg class="abs" style="left:183px;top:354.6px" width="10" height="14" viewBox="0 0 10 14"><path d="M0.4 0.6 L3.6 1.3 L3.6 13.6 L0.4 12.3 Z" fill="#2b2d30"/><path d="M3.6 1.3 L9.3 0.9 L9.3 10.2 L9.8 10.4 L9.8 12.6 L3.6 13.0 Z" fill="#0b0b0c"/><path d="M0.4 7 L3.6 9 L3.6 13.6 L0.4 12.3Z" fill="#45484c"/></svg><span class="tx" style="left:201.2px;top:353.8px;font-size:11.4px;line-height:16px;color:#1a1a1a;letter-spacing:-0.02px;">Temp</span><svg class="abs" style="left:183px;top:377.2px" width="10" height="14" viewBox="0 0 10 14"><path d="M0.4 0.6 L3.6 1.3 L3.6 13.6 L0.4 12.3 Z" fill="#2b2d30"/><path d="M3.6 1.3 L9.3 0.9 L9.3 10.2 L9.8 10.4 L9.8 12.6 L3.6 13.0 Z" fill="#0b0b0c"/><path d="M0.4 7 L3.6 9 L3.6 13.6 L0.4 12.3Z" fill="#45484c"/></svg><span class="tx" style="left:201.2px;top:376.4px;font-size:11.4px;line-height:16px;color:#1a1a1a;letter-spacing:-0.00px;">tracing</span><svg class="abs" style="left:183px;top:399.8px" width="10" height="14" viewBox="0 0 10 14"><path d="M0.4 0.6 L3.6 1.3 L3.6 13.6 L0.4 12.3 Z" fill="#2b2d30"/><path d="M3.6 1.3 L9.3 0.9 L9.3 10.2 L9.8 10.4 L9.8 12.6 L3.6 13.0 Z" fill="#0b0b0c"/><path d="M0.4 7 L3.6 9 L3.6 13.6 L0.4 12.3Z" fill="#45484c"/></svg><span class="tx" style="left:201.2px;top:399.0px;font-size:11.4px;line-height:16px;color:#1a1a1a;letter-spacing:-0.27px;">twain_32</span><svg class="abs" style="left:183px;top:422.4px" width="10" height="14" viewBox="0 0 10 14"><path d="M0.4 0.6 L3.6 1.3 L3.6 13.6 L0.4 12.3 Z" fill="#2b2d30"/><path d="M3.6 1.3 L9.3 0.9 L9.3 10.2 L9.8 10.4 L9.8 12.6 L3.6 13.0 Z" fill="#0b0b0c"/><path d="M0.4 7 L3.6 9 L3.6 13.6 L0.4 12.3Z" fill="#45484c"/></svg><span class="tx" style="left:201.2px;top:421.6px;font-size:11.4px;line-height:16px;color:#1a1a1a;letter-spacing:-1.09px;">UUS</span><svg class="abs" style="left:183px;top:445.0px" width="10" height="14" viewBox="0 0 10 14"><path d="M0.4 0.6 L3.6 1.3 L3.6 13.6 L0.4 12.3 Z" fill="#2b2d30"/><path d="M3.6 1.3 L9.3 0.9 L9.3 10.2 L9.8 10.4 L9.8 12.6 L3.6 13.0 Z" fill="#0b0b0c"/><path d="M0.4 7 L3.6 9 L3.6 13.6 L0.4 12.3Z" fill="#45484c"/></svg><span class="tx" style="left:201.2px;top:444.2px;font-size:11.4px;line-height:16px;color:#1a1a1a;letter-spacing:-1.10px;">Vss</span><svg class="abs" style="left:183px;top:467.6px" width="10" height="14" viewBox="0 0 10 14"><path d="M0.4 0.6 L3.6 1.3 L3.6 13.6 L0.4 12.3 Z" fill="#2b2d30"/><path d="M3.6 1.3 L9.3 0.9 L9.3 10.2 L9.8 10.4 L9.8 12.6 L3.6 13.0 Z" fill="#0b0b0c"/><path d="M0.4 7 L3.6 9 L3.6 13.6 L0.4 12.3Z" fill="#45484c"/></svg><span class="tx" style="left:201.2px;top:466.8px;font-size:11.4px;line-height:16px;color:#1a1a1a;letter-spacing:-0.76px;">WaaS</span><svg class="abs" style="left:183px;top:490.2px" width="10" height="14" viewBox="0 0 10 14"><path d="M0.4 0.6 L3.6 1.3 L3.6 13.6 L0.4 12.3 Z" fill="#2b2d30"/><path d="M3.6 1.3 L9.3 0.9 L9.3 10.2 L9.8 10.4 L9.8 12.6 L3.6 13.0 Z" fill="#0b0b0c"/><path d="M0.4 7 L3.6 9 L3.6 13.6 L0.4 12.3Z" fill="#45484c"/></svg><span class="tx" style="left:201.2px;top:489.4px;font-size:11.4px;line-height:16px;color:#1a1a1a;letter-spacing:-0.41px;">Web</span><svg class="abs" style="left:190px;top:512.8px" width="10" height="14" viewBox="0 0 10 14"><path d="M0.4 0.6 L3.6 1.3 L3.6 13.6 L0.4 12.3 Z" fill="#2b2d30"/><path d="M3.6 1.3 L9.3 0.9 L9.3 10.2 L9.8 10.4 L9.8 12.6 L3.6 13.0 Z" fill="#0b0b0c"/><path d="M0.4 7 L3.6 9 L3.6 13.6 L0.4 12.3Z" fill="#45484c"/></svg><span class="tx" style="left:208.4px;top:512.0px;font-size:11.4px;line-height:16px;color:#1a1a1a;letter-spacing:-0.52px;">Screen</span><div class="abs" style="left:127px;top:531.5px;width:133px;height:23px;background:#ebebeb"></div><svg class="abs" style="left:190px;top:535.4px" width="10" height="14" viewBox="0 0 10 14"><path d="M0.4 0.6 L3.6 1.3 L3.6 13.6 L0.4 12.3 Z" fill="#2b2d30"/><path d="M3.6 1.3 L9.3 0.9 L9.3 10.2 L9.8 10.4 L9.8 12.6 L3.6 13.0 Z" fill="#0b0b0c"/><path d="M0.4 7 L3.6 9 L3.6 13.6 L0.4 12.3Z" fill="#45484c"/></svg><span class="tx" style="left:208.4px;top:534.6px;font-size:11.4px;line-height:16px;color:#1a1a1a;letter-spacing:-0.38px;">Wallpaper</span></div>
<svg class="abs" style="left:303px;top:202px" width="68" height="88" viewBox="303 202 68 88">
<defs>
<linearGradient id="wf1" x1="0" y1="0" x2="1" y2="0.3"><stop offset="0" stop-color="#63666b"/><stop offset="0.5" stop-color="#47494e"/><stop offset="1" stop-color="#2a2b2f"/></linearGradient>
<linearGradient id="wf2" x1="0" y1="0" x2="0" y2="1"><stop offset="0" stop-color="#2a2b2e"/><stop offset="0.15" stop-color="#0d0d0e"/><stop offset="1" stop-color="#060607"/></linearGradient>
<linearGradient id="wf3" x1="0" y1="0" x2="0" y2="1"><stop offset="0" stop-color="#2f7fe0"/><stop offset="1" stop-color="#123a9a"/></linearGradient>
</defs>
<path d="M305 204L359 210.4Q361 210.8 361 213L361.6 281Q361.6 283 359.5 283.2L326 286.6L324 212Z" fill="url(#wf2)" stroke="#3a3b3e" stroke-width=".8"/>
<path d="M327 214.5L352.5 216.3Q355 216.6 355 219L355.6 276Q355.6 278.4 353 278L327 275Z" fill="#121213" stroke="#3c3d40" stroke-width="1"/>
<path d="M326 280L357 276.4L358 281.4L326.6 284.6Z" fill="#303134" opacity=".8"/>
<path d="M305 204L324.4 211.8L325.8 286.6L305.5 274.8Z" fill="url(#wf1)"/>
<path d="M305.3 243L314 236L325.2 262L325.8 286.6L305.5 274.8Z" fill="#5a5d63" opacity=".75"/>
<path d="M305.3 243L314 236L318 246L305.4 262Z" fill="#6a6d73" opacity=".55"/>
<rect x="332.4" y="223.2" width="35.4" height="44.6" rx="2.2" fill="#0b0b0c" stroke="#4a4b4e" stroke-width="1.1"/>
<path d="M338.6 236.6L344.4 229L350.6 236.6H345.4L346.6 235L344.4 232.2L342 235.4L343.6 236.6Z" fill="#2d8be8"/>
<path d="M338.2 237L344.4 228.6L351 237Z" fill="none" stroke="#3b9bf0" stroke-width="1.3" stroke-linejoin="round"/>
<g stroke="#d8d8d8" stroke-width="1.6">
<path d="M351.6 230.8H362M352.6 234.8H362M337.6 239.8H362M338.4 243.8H361.6M338.4 248.2H348.6M338.4 253H348.6M338.4 258.6H361.6M338.4 262.6H361.6"/>
</g>
<rect x="351.2" y="248" width="10.4" height="7.6" fill="url(#wf3)"/>
</svg><span class="tx" style="left:317.4px;top:289.6px;font-size:11.4px;line-height:16px;color:#1a1a1a;letter-spacing:-0.14px;">Windows</span><div class="abs" style="left:404.8px;top:233.2px;width:3px;height:36.5px;background:#111;border-radius:1px"></div><div class="abs" style="left:486px;top:232.2px;width:8.2px;height:38.0px;background:linear-gradient(90deg,#000 0,#0a0a0a 55%,#2a2a2a 80%,#1c1c1c 100%);border-radius:0 2.5px 2.5px 0"></div><svg class="abs" style="left:406px;top:223.2px" width="84.6" height="63" viewBox="0 0 85 63" preserveAspectRatio="none"><defs><filter id="b1" x="-30%" y="-30%" width="160%" height="160%"><feGaussianBlur stdDeviation="1.2"/></filter><linearGradient id="t1a" x1="0" y1="0" x2="0" y2="1"><stop offset="0" stop-color="#a8a8a8"/><stop offset="0.5" stop-color="#5a5a5a" stop-opacity=".8"/><stop offset="1" stop-color="#000" stop-opacity="0"/></linearGradient></defs>
<rect width="85" height="63" fill="#000"/>
<g filter="url(#b1)"><path d="M18 0L30 0L25.6 42Z" fill="url(#t1a)"/><path d="M31 0L40 0L36 32Z" fill="url(#t1a)" opacity=".5"/><path d="M9 0L13 0L11 24Z" fill="url(#t1a)" opacity=".25"/><path d="M49 0L52 0L50.5 12Z" fill="url(#t1a)" opacity=".3"/>
<path d="M13 63L21 52L31 52L35 63Z" fill="#4a4a4a" opacity=".7"/></g></svg><span class="tx" style="left:407.1px;top:289.6px;font-size:11.4px;line-height:16px;color:#1a1a1a;letter-spacing:-0.33px;">MorphsWalls_001</span><span class="tx" style="left:440.7px;top:304.0px;font-size:11.4px;line-height:16px;color:#1a1a1a;letter-spacing:0.05px;">.jpg</span><div class="abs" style="left:514.8px;top:243.39999999999998px;width:3px;height:27.199999999999996px;background:#111;border-radius:1px"></div><div class="abs" style="left:596px;top:242.39999999999998px;width:8.2px;height:28.699999999999996px;background:linear-gradient(90deg,#000 0,#0a0a0a 55%,#2a2a2a 80%,#1c1c1c 100%);border-radius:0 2.5px 2.5px 0"></div><svg class="abs" style="left:516px;top:234.2px" width="84.6" height="52" viewBox="0 0 85 52" preserveAspectRatio="none"><defs><filter id="b2" x="-30%" y="-30%" width="160%" height="160%"><feGaussianBlur stdDeviation="1.3"/></filter><filter id="b2b" x="-30%" y="-30%" width="160%" height="160%"><feGaussianBlur stdDeviation="0.35"/></filter><linearGradient id="t2a" x1="0" y1="0" x2="0" y2="1"><stop offset="0" stop-color="#0c3250"/><stop offset="0.22" stop-color="#166a8c"/><stop offset="0.5" stop-color="#1d8cac"/><stop offset="0.72" stop-color="#1fb4c6"/><stop offset="0.78" stop-color="#22c8d2"/><stop offset="0.81" stop-color="#16788c"/><stop offset="0.85" stop-color="#02080c"/><stop offset="1" stop-color="#000"/></linearGradient></defs>
<rect width="85" height="52" fill="url(#t2a)"/>
<g filter="url(#b2)"><ellipse cx="62" cy="6" rx="26" ry="6" fill="#0a2a46" opacity=".8"/><ellipse cx="8" cy="5" rx="10" ry="5" fill="#082238" opacity=".8"/><ellipse cx="22" cy="20" rx="26" ry="3.4" fill="#4ab0d4" opacity=".5"/><ellipse cx="60" cy="17" rx="24" ry="3.6" fill="#3a98c8" opacity=".45"/><ellipse cx="70" cy="30" rx="18" ry="6" fill="#147090" opacity=".6"/><ellipse cx="14" cy="38" rx="16" ry="3" fill="#28d8e0" opacity=".6"/></g>
<g filter="url(#b2b)"><path d="M25.4 2.2A6 6 0 0 1 15.6 8.6A7.4 7.4 0 0 0 25.4 2.2Z" fill="#d8ecf2"/>
<path d="M0 42.6Q10 41.4 22 41Q40 39.4 52 40.2Q70 40 85 38.2V52H0Z" fill="#010304"/>
<path d="M35.6 41V35.4Q31 35.6 28.6 34.6Q25.6 33 27.6 30.4Q27 27.4 30.6 26.4Q32.6 23.4 36 24.6Q39.6 23.6 41 26.4Q44.6 27.4 43.6 30.4Q46 33 43 34.6Q40.6 35.6 36.6 35.4V41Z" fill="#05222e"/>
<path d="M52 40.4V33Q51.6 30.4 54.6 30.4Q55.6 28.4 58 29.6Q60 27.6 62.4 29.6Q65 28.6 66 30.8Q68.6 31 68 34V39.6L63.6 40V36Q61.6 34 60 36.6V40.2Z" fill="#020c12"/></g></svg><span class="tx" style="left:517.1px;top:289.6px;font-size:11.4px;line-height:16px;color:#1a1a1a;letter-spacing:-0.33px;">MorphsWalls_002</span><span class="tx" style="left:550.7px;top:304.0px;font-size:11.4px;line-height:16px;color:#1a1a1a;letter-spacing:0.05px;">.jpg</span><div class="abs" style="left:624.8px;top:243.39999999999998px;width:3px;height:27.199999999999996px;background:#111;border-radius:1px"></div><div class="abs" style="left:706px;top:242.39999999999998px;width:8.2px;height:28.699999999999996px;background:linear-gradient(90deg,#000 0,#0a0a0a 55%,#2a2a2a 80%,#1c1c1c 100%);border-radius:0 2.5px 2.5px 0"></div><svg class="abs" style="left:626px;top:234.2px" width="84.6" height="52" viewBox="0 0 85 52" preserveAspectRatio="none"><defs><filter id="b3" x="-30%" y="-30%" width="160%" height="160%"><feGaussianBlur stdDeviation="2.2"/></filter><filter id="b3b" x="-30%" y="-30%" width="160%" height="160%"><feGaussianBlur stdDeviation="0.6"/></filter><filter id="b3c" x="-30%" y="-30%" width="160%" height="160%"><feGaussianBlur stdDeviation="1.1"/></filter></defs><rect width="85" height="52" fill="#060c18"/>
<g filter="url(#b3)"><ellipse cx="60" cy="24" rx="28" ry="22" fill="#0c2a42" opacity=".85"/><ellipse cx="50" cy="14" rx="8" ry="12" fill="#14405a" opacity=".7"/><ellipse cx="22" cy="40" rx="16" ry="10" fill="#5a4424" opacity=".85"/><ellipse cx="36" cy="47" rx="12" ry="4" fill="#34401e" opacity=".8"/><ellipse cx="23" cy="25" rx="6" ry="5" fill="#6a4664" opacity=".65"/><ellipse cx="33" cy="20" rx="5" ry="10" fill="#0a140a" opacity=".95" transform="rotate(15 33 20)"/><ellipse cx="8" cy="12" rx="11" ry="11" fill="#04060e" opacity=".85"/><ellipse cx="44" cy="38" rx="5" ry="4" fill="#3a5a30" opacity=".5"/></g>
<g filter="url(#b3c)"><ellipse cx="19.5" cy="33" rx="2.6" ry="5" fill="#f0a878" transform="rotate(35 19.5 33)"/><ellipse cx="43.4" cy="7.6" rx="3.4" ry="2.6" fill="#7ab8ec"/><path d="M43 8L39 22" stroke="#5a98c8" stroke-width="1.4" opacity=".6"/></g>
<g filter="url(#b3b)"><circle cx="43.4" cy="7.4" r="1.5" fill="#f0f8ff"/><circle cx="64" cy="9.5" r="7.6" fill="#081420"/><path d="M57.2 6.4A7.6 7.6 0 0 0 67.4 16.4A9.4 9.4 0 0 1 57.2 6.4Z" fill="#a8d0ec"/><circle cx="19.8" cy="31.6" r="1.3" fill="#ffe8d0"/><circle cx="26.8" cy="26.4" r=".9" fill="#ffd8e8"/><circle cx="57" cy="39.6" r=".8" fill="#8ac0d8"/><circle cx="79" cy="15" r=".8" fill="#6aa0d8"/><circle cx="22.5" cy="14.5" r=".8" fill="#6aa0d8"/><circle cx="30" cy="11" r=".7" fill="#6aa0d8"/></g></svg><span class="tx" style="left:627.1px;top:289.6px;font-size:11.4px;line-height:16px;color:#1a1a1a;letter-spacing:-0.33px;">MorphsWalls_003</span><span class="tx" style="left:660.7px;top:304.0px;font-size:11.4px;line-height:16px;color:#1a1a1a;letter-spacing:0.05px;">.jpg</span><div class="abs" style="left:734.8px;top:243.39999999999998px;width:3px;height:27.199999999999996px;background:#111;border-radius:1px"></div><div class="abs" style="left:816px;top:242.39999999999998px;width:8.2px;height:28.699999999999996px;background:linear-gradient(90deg,#000 0,#0a0a0a 55%,#2a2a2a 80%,#1c1c1c 100%);border-radius:0 2.5px 2.5px 0"></div><svg class="abs" style="left:736px;top:234.2px" width="84.6" height="52" viewBox="0 0 85 52" preserveAspectRatio="none"><defs><filter id="b4" x="-30%" y="-30%" width="160%" height="160%"><feGaussianBlur stdDeviation="0.7"/></filter><linearGradient id="t4a" x1="0" y1="0" x2="1" y2="1"><stop offset="0" stop-color="#e82434"/><stop offset="0.45" stop-color="#c81a2a"/><stop offset="0.75" stop-color="#b01626"/><stop offset="1" stop-color="#d82038"/></linearGradient></defs><rect width="85" height="52" fill="#000"/>
<g filter="url(#b4)">
<path d="M0 0H11C20 14 44 30 85 51V53H70C54 40 30 24 0 17.6Z" fill="url(#t4a)"/>
<path d="M14 0H22C28 14 48 30 85 50.4L85 51C44 30 22 14 14 0Z" fill="#b81828"/>
<path d="M25 0H31C34 14 52 30 85 49.6V50.4C48 30 30 14 25 0Z" fill="#8a1020"/>
<path d="M34 0H38C40 14 54 29 85 48.6V49.6C52 30 36 14 34 0Z" fill="#600a16"/>
<path d="M40 0H42.6C44 13 56 28 85 47.6V48.6C54 29 41.6 14 40 0Z" fill="#3c060e"/>
<g fill="none" stroke="#000"><path d="M0 5.4C22 12 42 28 76 53" stroke-width="1.2" opacity=".7"/><path d="M0 9.6C22 15 42 30 74 53" stroke-width="1.1" opacity=".65"/><path d="M0 13.6C20 18 40 31 72 53" stroke-width="1" opacity=".6"/><path d="M11.6 0C20 14 44 30 85 51" stroke-width="1.8"/><path d="M23 0C28 14 48 30 85 50.4" stroke-width="1.6"/><path d="M32 0C34 14 52 30 85 49.6" stroke-width="1.4"/><path d="M38.8 0C40 14 54 29 85 48.6" stroke-width="1.2"/></g>
</g></svg><span class="tx" style="left:737.1px;top:289.6px;font-size:11.4px;line-height:16px;color:#1a1a1a;letter-spacing:-0.33px;">MorphsWalls_004</span><span class="tx" style="left:770.7px;top:304.0px;font-size:11.4px;line-height:16px;color:#1a1a1a;letter-spacing:0.05px;">.jpg</span><div class="abs" style="left:294.8px;top:367.59999999999997px;width:3px;height:27.199999999999996px;background:#111;border-radius:1px"></div><div class="abs" style="left:376px;top:366.59999999999997px;width:8.2px;height:28.699999999999996px;background:linear-gradient(90deg,#000 0,#0a0a0a 55%,#2a2a2a 80%,#1c1c1c 100%);border-radius:0 2.5px 2.5px 0"></div><svg class="abs" style="left:296px;top:358.4px" width="84.6" height="52" viewBox="0 0 85 52" preserveAspectRatio="none"><defs><filter id="b5" x="-30%" y="-30%" width="160%" height="160%"><feGaussianBlur stdDeviation="1.5"/></filter><filter id="b5b" x="-30%" y="-30%" width="160%" height="160%"><feGaussianBlur stdDeviation="0.5"/></filter><linearGradient id="t5a" x1="0" y1="0" x2="0" y2="1"><stop offset="0" stop-color="#2a2f78"/><stop offset="0.1" stop-color="#4a4488"/><stop offset="0.26" stop-color="#b890b8"/><stop offset="0.37" stop-color="#e4d0e8"/><stop offset="0.405" stop-color="#c8a8c0"/><stop offset="0.42" stop-color="#3a2a44"/><stop offset="0.44" stop-color="#86688e"/><stop offset="0.55" stop-color="#84587e"/><stop offset="0.7" stop-color="#4c3258"/><stop offset="0.85" stop-color="#1c1428"/><stop offset="1" stop-color="#07050c"/></linearGradient></defs>
<rect width="85" height="52" fill="url(#t5a)"/>
<g filter="url(#b5)"><ellipse cx="68" cy="9" rx="19" ry="5.4" fill="#5e3252" opacity=".95" transform="rotate(-14 68 9)"/><ellipse cx="80" cy="3" rx="10" ry="3" fill="#3a2a60" opacity=".8"/><ellipse cx="11" cy="7" rx="14" ry="3.6" fill="#d098b4" opacity=".85" transform="rotate(14 11 7)"/><ellipse cx="8" cy="15" rx="10" ry="2.4" fill="#b87898" opacity=".8" transform="rotate(10 8 15)"/><ellipse cx="40" cy="9" rx="13" ry="3.6" fill="#d8a0bc" opacity=".8" transform="rotate(-10 40 9)"/><ellipse cx="36" cy="1.6" rx="18" ry="3" fill="#1c2468" opacity=".85"/><ellipse cx="50" cy="27" rx="6" ry="6" fill="#e0b8d4" opacity=".5"/><ellipse cx="30" cy="27" rx="10" ry="3" fill="#c898b8" opacity=".4"/><ellipse cx="13" cy="45" rx="19" ry="8.6" fill="#0a0810" opacity=".96"/><ellipse cx="50" cy="51" rx="18" ry="6" fill="#0a0810" opacity=".9"/><ellipse cx="40" cy="40" rx="3.6" ry="2.6" fill="#0e0a14"/><ellipse cx="72" cy="42" rx="14" ry="8" fill="#161028" opacity=".75"/></g>
<g filter="url(#b5b)"><path d="M0 21.4Q8 20 14 21.4H28Q34 20 40 21.4L85 21.6V22.4H0Z" fill="#2a1e30"/></g></svg><span class="tx" style="left:297.1px;top:413.6px;font-size:11.4px;line-height:16px;color:#1a1a1a;letter-spacing:-0.33px;">MorphsWalls_005</span><span class="tx" style="left:330.7px;top:428.0px;font-size:11.4px;line-height:16px;color:#1a1a1a;letter-spacing:0.05px;">.jpg</span><div class="abs" style="left:404.8px;top:367.59999999999997px;width:3px;height:27.199999999999996px;background:#111;border-radius:1px"></div><div class="abs" style="left:486px;top:366.59999999999997px;width:8.2px;height:28.699999999999996px;background:linear-gradient(90deg,#000 0,#0a0a0a 55%,#2a2a2a 80%,#1c1c1c 100%);border-radius:0 2.5px 2.5px 0"></div><svg class="abs" style="left:406px;top:358.4px" width="84.6" height="52" viewBox="0 0 85 52" preserveAspectRatio="none"><defs><filter id="b6" x="-30%" y="-30%" width="160%" height="160%"><feGaussianBlur stdDeviation="1.8"/></filter><filter id="b6b" x="-30%" y="-30%" width="160%" height="160%"><feGaussianBlur stdDeviation="0.7"/></filter><linearGradient id="t6a" x1="0" y1="0" x2="0" y2="1"><stop offset="0" stop-color="#0c0c10"/><stop offset="0.3" stop-color="#1e1e24"/><stop offset="0.6" stop-color="#2a282c"/><stop offset="1" stop-color="#0c0b0d"/></linearGradient></defs><rect width="85" height="52" fill="url(#t6a)"/>
<g filter="url(#b6)"><ellipse cx="30" cy="36" rx="26" ry="9" fill="#5a5458" opacity=".7"/><ellipse cx="27" cy="26" rx="8" ry="6" fill="#6a686c" opacity=".7"/><ellipse cx="60" cy="36" rx="20" ry="5" fill="#343236" opacity=".8"/><ellipse cx="26.5" cy="17" rx="8" ry="7" fill="#c8d8e0"/><ellipse cx="26" cy="16.6" rx="5" ry="4.6" fill="#fff"/><ellipse cx="42" cy="50" rx="44" ry="5" fill="#08080a" opacity=".9"/></g>
<g filter="url(#b6b)" stroke="#09090b"><path d="M13 0L15.6 27" stroke-width="2.2"/><path d="M6 0L6.6 25" stroke-width="2.2"/><path d="M1.4 0L1.6 22" stroke-width="2"/><path d="M46 0L47.4 31" stroke-width="2.8"/><path d="M41 0L41.6 24" stroke-width="1.6"/><path d="M62.6 0L63.8 33" stroke-width="3.2"/><path d="M54.4 0L54.8 26" stroke-width="1.8"/><path d="M72.4 0L71.8 30" stroke-width="2.6"/><path d="M80 0L80.4 28" stroke-width="3"/><path d="M36 0L36.4 18" stroke-width="1.2"/><path d="M67.6 0L67.6 24" stroke-width="1.2"/><path d="M50.6 0L50.8 22" stroke-width="1.2"/></g></svg><span class="tx" style="left:407.1px;top:413.6px;font-size:11.4px;line-height:16px;color:#1a1a1a;letter-spacing:-0.33px;">MorphsWalls_006</span><span class="tx" style="left:440.7px;top:428.0px;font-size:11.4px;line-height:16px;color:#1a1a1a;letter-spacing:0.05px;">.jpg</span><div class="abs" style="left:514.8px;top:371.59999999999997px;width:3px;height:23.199999999999996px;background:#111;border-radius:1px"></div><div class="abs" style="left:596px;top:370.59999999999997px;width:8.2px;height:24.699999999999996px;background:linear-gradient(90deg,#000 0,#0a0a0a 55%,#2a2a2a 80%,#1c1c1c 100%);border-radius:0 2.5px 2.5px 0"></div><svg class="abs" style="left:516px;top:362.4px" width="84.6" height="48" viewBox="0 0 85 48" preserveAspectRatio="none"><defs><filter id="b7" x="-30%" y="-30%" width="160%" height="160%"><feGaussianBlur stdDeviation="1.4"/></filter><linearGradient id="t7a" x1="0" y1="0" x2="0" y2="1"><stop offset="0" stop-color="#052244"/><stop offset="0.4" stop-color="#083870"/><stop offset="0.62" stop-color="#1260b4"/><stop offset="0.72" stop-color="#2078c8"/><stop offset="0.77" stop-color="#a8dcf0"/><stop offset="0.82" stop-color="#124a88"/><stop offset="0.9" stop-color="#061838"/><stop offset="1" stop-color="#020814"/></linearGradient></defs>
<rect width="85" height="48" fill="url(#t7a)"/>
<g filter="url(#b7)"><ellipse cx="45" cy="15" rx="30" ry="9" fill="#031a40" opacity=".7"/><path d="M18 0L13 18" stroke="#2a90d0" stroke-width="1.6" opacity=".8"/><path d="M30 6L28 22" stroke="#2a90d0" stroke-width="1.2" opacity=".7"/><path d="M76 0L84 14" stroke="#2a90d0" stroke-width="2" opacity=".8"/><ellipse cx="48" cy="1" rx="4" ry="1.6" fill="#40b0e8"/><ellipse cx="66" cy="33" rx="10" ry="1.6" fill="#6ab8e8" opacity=".7"/></g>
<rect x="41.4" y="33.4" width="1.8" height="4.6" fill="#081428"/></svg><span class="tx" style="left:517.1px;top:413.6px;font-size:11.4px;line-height:16px;color:#1a1a1a;letter-spacing:-0.33px;">MorphsWalls_007</span><span class="tx" style="left:550.7px;top:428.0px;font-size:11.4px;line-height:16px;color:#1a1a1a;letter-spacing:0.05px;">.jpg</span><div class="abs" style="left:624.8px;top:371.59999999999997px;width:3px;height:23.199999999999996px;background:#111;border-radius:1px"></div><div class="abs" style="left:706px;top:370.59999999999997px;width:8.2px;height:24.699999999999996px;background:linear-gradient(90deg,#000 0,#0a0a0a 55%,#2a2a2a 80%,#1c1c1c 100%);border-radius:0 2.5px 2.5px 0"></div><svg class="abs" style="left:626px;top:362.4px" width="84.6" height="48" viewBox="0 0 85 48" preserveAspectRatio="none"><defs><filter id="b8" x="-30%" y="-30%" width="160%" height="160%"><feGaussianBlur stdDeviation="1.5"/></filter><filter id="b8b" x="-30%" y="-30%" width="160%" height="160%"><feGaussianBlur stdDeviation="0.9"/></filter><linearGradient id="t8a" x1="0" y1="0" x2="0" y2="1"><stop offset="0" stop-color="#0c1250"/><stop offset="0.3" stop-color="#141c78"/><stop offset="0.52" stop-color="#3038a8"/><stop offset="0.62" stop-color="#6a4aa0"/><stop offset="0.75" stop-color="#7a3060"/><stop offset="1" stop-color="#38102c"/></linearGradient><radialGradient id="t8b" cx="0.5" cy="0.22" r="0.55"><stop offset="0" stop-color="#4a80f8" stop-opacity=".95"/><stop offset="1" stop-color="#1828a0" stop-opacity="0"/></radialGradient></defs>
<rect width="85" height="48" fill="url(#t8a)"/><rect width="85" height="48" fill="url(#t8b)"/>
<g filter="url(#b8)"><ellipse cx="42" cy="27" rx="44" ry="2.6" fill="#6a60c8" opacity=".6"/><ellipse cx="4" cy="24" rx="10" ry="24" fill="#080a30" opacity=".6"/><ellipse cx="82" cy="20" rx="9" ry="20" fill="#080a30" opacity=".6"/></g>
<g filter="url(#b8)"><ellipse cx="43" cy="10" rx="13" ry="10" fill="#5a98f8" opacity=".55"/></g><g filter="url(#b8b)"><path d="M43 0.6C54 0.6 57 13 49 19C53 11 47 6 42 9C37.6 12 42 17 45.6 14.6C40 22 30 15 32.4 7.6C33.6 3 38 0.6 43 0.6Z" fill="#a4d4ff" opacity=".9"/><ellipse cx="42.8" cy="9" rx="3.8" ry="3.2" fill="#fff"/><path d="M49 19Q48 22 45.6 24" stroke="#7ab4f4" stroke-width="1.2" fill="none"/>
<path d="M40.4 27Q40.6 23.4 41.6 23.4Q42.8 23.4 43 27L43.2 33.6H40.6Z" fill="#0a1030"/></g></svg><span class="tx" style="left:627.1px;top:413.6px;font-size:11.4px;line-height:16px;color:#1a1a1a;letter-spacing:-0.33px;">MorphsWalls_008</span><span class="tx" style="left:660.7px;top:428.0px;font-size:11.4px;line-height:16px;color:#1a1a1a;letter-spacing:0.05px;">.jpg</span><div class="abs" style="left:734.8px;top:371.59999999999997px;width:3px;height:23.199999999999996px;background:#111;border-radius:1px"></div><div class="abs" style="left:816px;top:370.59999999999997px;width:8.2px;height:24.699999999999996px;background:linear-gradient(90deg,#000 0,#0a0a0a 55%,#2a2a2a 80%,#1c1c1c 100%);border-radius:0 2.5px 2.5px 0"></div><svg class="abs" style="left:736px;top:362.4px" width="84.6" height="48" viewBox="0 0 85 48" preserveAspectRatio="none"><defs><filter id="b9" x="-30%" y="-30%" width="160%" height="160%"><feGaussianBlur stdDeviation="1.6"/></filter></defs><rect width="85" height="48" fill="#070b14"/>
<g filter="url(#b9)"><ellipse cx="42" cy="18" rx="40" ry="10" fill="#141e34" opacity=".9"/><ellipse cx="40" cy="34" rx="44" ry="6" fill="#0e3a80" opacity=".9"/><ellipse cx="28" cy="35" rx="12" ry="2.6" fill="#2a7ae0"/><ellipse cx="41" cy="33.6" rx="6" ry="2" fill="#d0e8ff"/><ellipse cx="25" cy="26" rx="4" ry="1.8" fill="#8ab0e0" opacity=".9"/><path d="M62 34L72 25L82 33Z" fill="#2a4a98" opacity=".9"/><ellipse cx="6" cy="30" rx="6" ry="2" fill="#1a3a80" opacity=".8"/><ellipse cx="42" cy="46" rx="44" ry="5" fill="#050a18" opacity=".9"/></g></svg><span class="tx" style="left:737.1px;top:413.6px;font-size:11.4px;line-height:16px;color:#1a1a1a;letter-spacing:-0.33px;">MorphsWalls_009</span><span class="tx" style="left:770.7px;top:428.0px;font-size:11.4px;line-height:16px;color:#1a1a1a;letter-spacing:0.05px;">.jpg</span><div class="abs" style="left:294.8px;top:496.2px;width:3px;height:22.6px;background:#111;border-radius:1px"></div><div class="abs" style="left:376px;top:495.2px;width:8.2px;height:24.1px;background:linear-gradient(90deg,#000 0,#0a0a0a 55%,#2a2a2a 80%,#1c1c1c 100%);border-radius:0 2.5px 2.5px 0"></div><svg class="abs" style="left:296px;top:487.0px" width="84.6" height="47.4" viewBox="0 0 85 47.4" preserveAspectRatio="none"><defs><filter id="b10" x="-30%" y="-30%" width="160%" height="160%"><feGaussianBlur stdDeviation="3"/></filter><pattern id="p10" width="2.1" height="2.1" patternUnits="userSpaceOnUse"><path d="M0 0H2.1M0 0V2.1" stroke="#000" stroke-width="1.1" opacity=".72"/></pattern></defs><rect width="85" height="47.4" fill="#050302"/>
<g filter="url(#b10)"><ellipse cx="37" cy="4" rx="15" ry="8" fill="#a05818" opacity=".95"/><ellipse cx="56" cy="20" rx="16" ry="6" fill="#4a2a0c" opacity=".75" transform="rotate(35 56 20)"/><ellipse cx="8" cy="44" rx="20" ry="11" fill="#b0641c" opacity=".95"/><ellipse cx="36" cy="48" rx="14" ry="4" fill="#7a4414" opacity=".7"/></g><rect width="85" height="47.4" fill="url(#p10)"/></svg><div class="abs" style="left:404.8px;top:496.2px;width:3px;height:22.6px;background:#111;border-radius:1px"></div><div class="abs" style="left:486px;top:495.2px;width:8.2px;height:24.1px;background:linear-gradient(90deg,#000 0,#0a0a0a 55%,#2a2a2a 80%,#1c1c1c 100%);border-radius:0 2.5px 2.5px 0"></div><svg class="abs" style="left:406px;top:487.0px" width="84.6" height="47.4" viewBox="0 0 85 47.4" preserveAspectRatio="none"><defs><filter id="b11" x="-30%" y="-30%" width="160%" height="160%"><feGaussianBlur stdDeviation="1.6"/></filter><radialGradient id="t11a" cx="0.52" cy="0.47" r="0.55"><stop offset="0" stop-color="#fff"/><stop offset="0.08" stop-color="#ffd0e8"/><stop offset="0.22" stop-color="#e468b0"/><stop offset="0.42" stop-color="#a048a8"/><stop offset="0.7" stop-color="#4a2478"/><stop offset="1" stop-color="#0a0414"/></radialGradient></defs><rect width="85" height="47.4" fill="#05020a"/>
<ellipse cx="44" cy="24" rx="44" ry="30" fill="url(#t11a)" transform="rotate(-18 44 24)"/>
<g filter="url(#b11)"><ellipse cx="76" cy="8" rx="12" ry="10" fill="#05020a"/><ellipse cx="4" cy="3" rx="10" ry="6" fill="#05020a" opacity=".9"/><ellipse cx="10" cy="30" rx="8" ry="10" fill="#4a2480" opacity=".5"/><ellipse cx="80" cy="40" rx="7" ry="8" fill="#05020a" opacity=".9"/><ellipse cx="30" cy="6" rx="10" ry="3" fill="#b068c8" opacity=".6" transform="rotate(-20 30 6)"/></g></svg><div class="abs" style="left:514.8px;top:496.2px;width:3px;height:22.6px;background:#111;border-radius:1px"></div><div class="abs" style="left:596px;top:495.2px;width:8.2px;height:24.1px;background:linear-gradient(90deg,#000 0,#0a0a0a 55%,#2a2a2a 80%,#1c1c1c 100%);border-radius:0 2.5px 2.5px 0"></div><svg class="abs" style="left:516px;top:487.0px" width="84.6" height="47.4" viewBox="0 0 85 47.4" preserveAspectRatio="none"><defs><filter id="b12" x="-30%" y="-30%" width="160%" height="160%"><feGaussianBlur stdDeviation="3.2"/></filter><linearGradient id="t12a" x1="0" y1="0.3" x2="1" y2="0.7"><stop offset="0" stop-color="#2ec4dc"/><stop offset="0.35" stop-color="#1a92c0"/><stop offset="0.7" stop-color="#1670b8"/><stop offset="1" stop-color="#0c3c78"/></linearGradient></defs><rect width="85" height="47.4" fill="url(#t12a)"/>
<g filter="url(#b12)"><ellipse cx="58" cy="0" rx="36" ry="9" fill="#020a14" transform="rotate(8 58 0)"/><ellipse cx="30" cy="49" rx="40" ry="7" fill="#020a14" transform="rotate(4 30 49)"/><ellipse cx="8" cy="22" rx="12" ry="10" fill="#3cd8ec" opacity=".8"/><ellipse cx="36" cy="18" rx="22" ry="4" fill="#0c4c7c" opacity=".55" transform="rotate(24 36 18)"/><ellipse cx="84" cy="8" rx="6" ry="10" fill="#020a14"/><ellipse cx="74" cy="27" rx="10" ry="8" fill="#2a94e4" opacity=".75"/><ellipse cx="48" cy="34" rx="16" ry="5" fill="#0a3c68" opacity=".6" transform="rotate(14 48 34)"/><ellipse cx="0" cy="4" rx="8" ry="6" fill="#041420" opacity=".9"/></g></svg><div class="abs" style="left:624.8px;top:496.2px;width:3px;height:22.6px;background:#111;border-radius:1px"></div><div class="abs" style="left:706px;top:495.2px;width:8.2px;height:24.1px;background:linear-gradient(90deg,#000 0,#0a0a0a 55%,#2a2a2a 80%,#1c1c1c 100%);border-radius:0 2.5px 2.5px 0"></div><svg class="abs" style="left:626px;top:487.0px" width="84.6" height="47.4" viewBox="0 0 85 47.4" preserveAspectRatio="none"><defs><filter id="b13" x="-30%" y="-30%" width="160%" height="160%"><feGaussianBlur stdDeviation="1.3"/></filter><filter id="b13b" x="-30%" y="-30%" width="160%" height="160%"><feGaussianBlur stdDeviation="0.5"/></filter><linearGradient id="t13a" x1="0" y1="0" x2="0" y2="1"><stop offset="0" stop-color="#07051a"/><stop offset="0.38" stop-color="#0e0a40"/><stop offset="0.52" stop-color="#1a1488"/><stop offset="0.62" stop-color="#1818a8"/><stop offset="1" stop-color="#1424b0"/></linearGradient></defs><rect width="85" height="47.4" fill="url(#t13a)"/>
<g filter="url(#b13)"><ellipse cx="42" cy="24.4" rx="5" ry="4" fill="#ff4080"/><ellipse cx="42" cy="23.6" rx="2.6" ry="2.2" fill="#fff"/><path d="M37 47.4L41 29H44.4L49 47.4Z" fill="#e02868" opacity=".9"/><ellipse cx="31" cy="22" rx="2.4" ry="1.8" fill="#ff2858"/><ellipse cx="26" cy="26" rx="1.8" ry="1.4" fill="#e82050" opacity=".9"/><path d="M30 30L32 30L31.6 44L29 44Z" fill="#c82060" opacity=".7"/><ellipse cx="12" cy="28" rx="12" ry="2.4" fill="#4a5af0" opacity=".85"/><path d="M4 31H24L26 47H2Z" fill="#2a44e0" opacity=".7"/><ellipse cx="54" cy="27" rx="4" ry="3" fill="#3a50e8" opacity=".8"/><path d="M51 30H57L58 47H50Z" fill="#2a40d8" opacity=".6"/><ellipse cx="76" cy="24" rx="10" ry="22" fill="#0a0830" opacity=".9"/><ellipse cx="6" cy="10" rx="9" ry="10" fill="#06051a" opacity=".8"/><ellipse cx="70" cy="40" rx="12" ry="6" fill="#241878" opacity=".8"/><ellipse cx="50" cy="21" rx="2" ry="1.4" fill="#ff4070" opacity=".8"/></g>
<g filter="url(#b13b)"><path d="M66.4 2V40" stroke="#05041a" stroke-width="1.3"/><path d="M41.2 26.4Q42.2 25.4 43.2 26.4L43.6 33H40.8Z" fill="#0a0420"/><circle cx="30" cy="5" r=".6" fill="#c8d0ff"/><circle cx="52" cy="9" r=".6" fill="#c8d0ff"/><circle cx="69" cy="2.6" r=".9" fill="#e8f0ff"/><circle cx="59" cy="4" r=".6" fill="#a8b0ff"/><circle cx="38" cy="13" r=".6" fill="#a8b0ff"/><circle cx="22" cy="15" r=".7" fill="#ff80a0"/><circle cx="46" cy="16" r=".6" fill="#8090ff"/></g></svg><div class="abs" style="left:734.8px;top:496.2px;width:3px;height:22.6px;background:#111;border-radius:1px"></div><div class="abs" style="left:816px;top:495.2px;width:8.2px;height:24.1px;background:linear-gradient(90deg,#000 0,#0a0a0a 55%,#2a2a2a 80%,#1c1c1c 100%);border-radius:0 2.5px 2.5px 0"></div><svg class="abs" style="left:736px;top:487.0px" width="84.6" height="47.4" viewBox="0 0 85 47.4" preserveAspectRatio="none"><defs><filter id="b14" x="-30%" y="-30%" width="160%" height="160%"><feGaussianBlur stdDeviation="1.5"/></filter><filter id="b14b" x="-30%" y="-30%" width="160%" height="160%"><feGaussianBlur stdDeviation="0.6"/></filter></defs><rect width="85" height="47.4" fill="#03060c"/>
<g filter="url(#b14)"><ellipse cx="46" cy="30" rx="44" ry="13" fill="#0e2034" opacity=".95"/><ellipse cx="30" cy="38" rx="30" ry="8" fill="#0a1828" opacity=".9"/><ellipse cx="70" cy="16" rx="16" ry="4" fill="#101c2c" opacity=".9"/></g>
<g filter="url(#b14b)"><path d="M1 18L20 15.6L22.6 18.4L3 23Z" fill="#5a5e80" opacity=".85"/><path d="M3 23L22.6 18.4V20L3.4 24.6Z" fill="#2a2e48" opacity=".9"/>
<path d="M24 25.4L43 17.4L47.6 20L29 29.6Z" fill="#a4a8d0"/><path d="M24 25.4L29 29.6V32.6L24 28.4Z" fill="#3a3e60"/><path d="M29 29.6L47.6 20V23L29 32.6Z" fill="#5a5e88"/>
<path d="M42.4 31L50 18.4L53.6 19.6L46.6 33Z" fill="#b0b4d8"/><path d="M42.4 31L46.6 33V36.4L42.4 34Z" fill="#6a6e98"/><path d="M46.6 33L53.6 19.6V22.6L46.6 36.4Z" fill="#4a4e78"/>
<path d="M55.6 38.6L62.6 20.6L66 21.8L60 40.4Z" fill="#b4b8dc"/><path d="M55.6 38.6L60 40.4V43.4L55.6 41.6Z" fill="#8a8eb8"/><path d="M60 40.4L66 21.8V24.8L60 43.4Z" fill="#4a4e78"/>
<path d="M62 14.6L72 13.6L73.6 16L63.6 17.4Z" fill="#3a4058" opacity=".9"/><path d="M76 15L84 14V18L77 19Z" fill="#2a3048" opacity=".9"/><path d="M22 13.6L30 12.6L31 14.6L23 16Z" fill="#2a3048" opacity=".8"/></g></svg>
<div class="abs" style="left:127px;top:540px;width:731px;height:57px;background:#f1f5fb;border-top:1px solid #d9e4f3"></div><svg class="abs" style="left:149px;top:546px" width="32" height="45" viewBox="0 0 32 45"><defs><linearGradient id="bf1" x1="0" y1="0" x2="1" y2="1"><stop offset="0" stop-color="#3a3c40"/><stop offset="1" stop-color="#1c1d20"/></linearGradient></defs><path d="M1 0.8L11.5 4.2L11.5 44.4L1 39.6Z" fill="url(#bf1)"/><path d="M11.5 4.2L30 2.6L30 31L31.4 31.6V41L11.5 43.2Z" fill="#0c0c0d"/><path d="M1 22L11.5 30V44.4L1 39.6Z" fill="#4a4d52"/><path d="M1 0.8L11.5 4.2L7 20Z" fill="#2a2c2f"/></svg><span class="tx" style="left:206.0px;top:546.3px;font-size:12.73px;line-height:18px;color:#2a3a5e;letter-spacing:-0.47px;">160 items</span><div class="abs" style="left:127px;top:596px;width:731px;height:22px;background:#f0f0f0;border-top:1px solid #e3e3e3"></div><span class="tx" style="left:136.5px;top:600.0px;font-size:11.4px;line-height:16px;color:#1a1a1a;letter-spacing:-0.25px;">160 items</span><div class="abs" style="left:195px;top:599px;width:1px;height:17px;background:#a0a0a0"></div><div class="abs" style="left:803.2px;top:598.6px;width:1px;height:18px;background:#a0a0a0"></div><svg class="abs" style="left:815px;top:601px" width="13" height="12" viewBox="0 0 13 12"><path d="M0.7 1.7H12M0.7 4.5H12M0.7 7.4H12M0.7 10.3H12" stroke="#666" stroke-width="1"/></svg><div class="abs" style="left:832.3px;top:597px;width:22.6px;height:21px;background:#c9e0f6;border:1px solid #a6cff4"></div><svg class="abs" style="left:838px;top:601px" width="14" height="14" viewBox="0 0 14 14"><rect x="1.7" y="1.7" width="10" height="9" rx=".6" fill="#fff" stroke="#6e6e6e" stroke-width="1"/><path d="M1.2 12.4H12.2" stroke="#777" stroke-width="1"/></svg>
<div class="abs" style="left:127px;top:65px;width:731px;height:553px;box-shadow:inset 0 0 0 1px rgba(255,255,255,.6)"></div><div class="abs" style="left:127px;top:65px;width:731px;height:1px;background:#343434"></div><div class="abs" style="left:128px;top:66px;width:729px;height:1px;background:rgba(255,255,255,.55)"></div>
</div>
<div id="task"><div class="abs" style="left:0;top:0;width:2px;height:32px;background:#000"></div><svg class="abs" style="left:447px;top:9px" width="20" height="20" viewBox="0 0 20 20"><defs><linearGradient id="wl" x1="0" y1="0" x2="1" y2="1"><stop offset="0" stop-color="#6cc4f8"/><stop offset="1" stop-color="#1a6ad8"/></linearGradient></defs><path d="M1.2 0H9.3V9.3H0V1.2Q0 0 1.2 0ZM10.7 0H18.8Q20 0 20 1.2V9.3H10.7ZM0 10.7H9.3V20H1.2Q0 20 0 18.8ZM10.7 10.7H20V18.8Q20 20 18.8 20H10.7Z" fill="url(#wl)"/></svg><div class="abs" style="left:483px;top:2px;width:45px;height:40px;border-radius:5px;background:#fbfbfb;border:1px solid #e9e9e9"></div><svg class="abs" style="left:494px;top:9px" width="24" height="24" viewBox="0 0 24 24"><defs><linearGradient id="fe1" x1="0" y1="0" x2="0" y2="1"><stop offset="0" stop-color="#ffe27a"/><stop offset="1" stop-color="#f6c232"/></linearGradient></defs><path d="M0 2.4Q0 1 1.4 1H7.6L10 3.2H22Q23.4 3.2 23.4 4.6V8H0Z" fill="#e8a820"/><rect x="0" y="4.6" width="23.4" height="19" rx="1.4" fill="url(#fe1)"/><path d="M3.8 23.6V17.4Q3.8 14.2 7 14.2H16.4Q19.6 14.2 19.6 17.4V23.6Z" fill="#1a78d8"/><rect x="6.6" y="17.6" width="10.4" height="1.4" rx=".7" fill="#0a4a9a"/></svg><svg class="abs" style="left:837px;top:15px" width="11" height="8" viewBox="0 0 11 8"><path d="M1 6.4L5.5 1.6L10 6.4" stroke="#3a3a3a" stroke-width="1.2" fill="none" stroke-linecap="round" stroke-linejoin="round"/></svg><svg class="abs" style="left:858px;top:12px" width="16" height="15" viewBox="0 0 16 15"><path d="M1.4 5.2H3.6L7 2V11L3.6 8.2H1.4Z" fill="none" stroke="#2a2a2a" stroke-width="1.2" stroke-linejoin="round"/><circle cx="10.4" cy="9.6" r="4.4" fill="#1a1a1a"/><path d="M8.6 7.8L12.2 11.4M12.2 7.8L8.6 11.4" stroke="#fff" stroke-width="1.2"/></svg><svg class="abs" style="left:878px;top:10px" width="18" height="18" viewBox="0 0 18 18"><rect x="1.4" y="2.4" width="11.6" height="10" fill="none" stroke="#2a2a2a" stroke-width="1.3"/><path d="M5.6 12.6V15.4M8.8 12.6V15.4M3.6 15.8H11" stroke="#2a2a2a" stroke-width="1.2"/><rect x="12" y="1" width="3.6" height="5.4" rx=".8" fill="#f3f3f3" stroke="#2a2a2a" stroke-width="1.1"/><path d="M13.8 6.4V15.4H11" stroke="#2a2a2a" stroke-width="1.1" fill="none"/><path d="M13.2 2.4V4M14.4 2.4V4" stroke="#2a2a2a" stroke-width=".7"/></svg><span class="tx" style="left:909.8px;top:5.2px;font-size:11px;line-height:14px;color:#3c3c3c;letter-spacing:-0.68px;">5:32 AM</span><span class="tx" style="left:903.9px;top:19.6px;font-size:11px;line-height:14px;color:#3c3c3c;letter-spacing:-0.60px;">11/17/2025</span></div>
<div class="abs" style="left:0;top:0;width:2px;height:711px;background:#000"></div>
</body></html>
